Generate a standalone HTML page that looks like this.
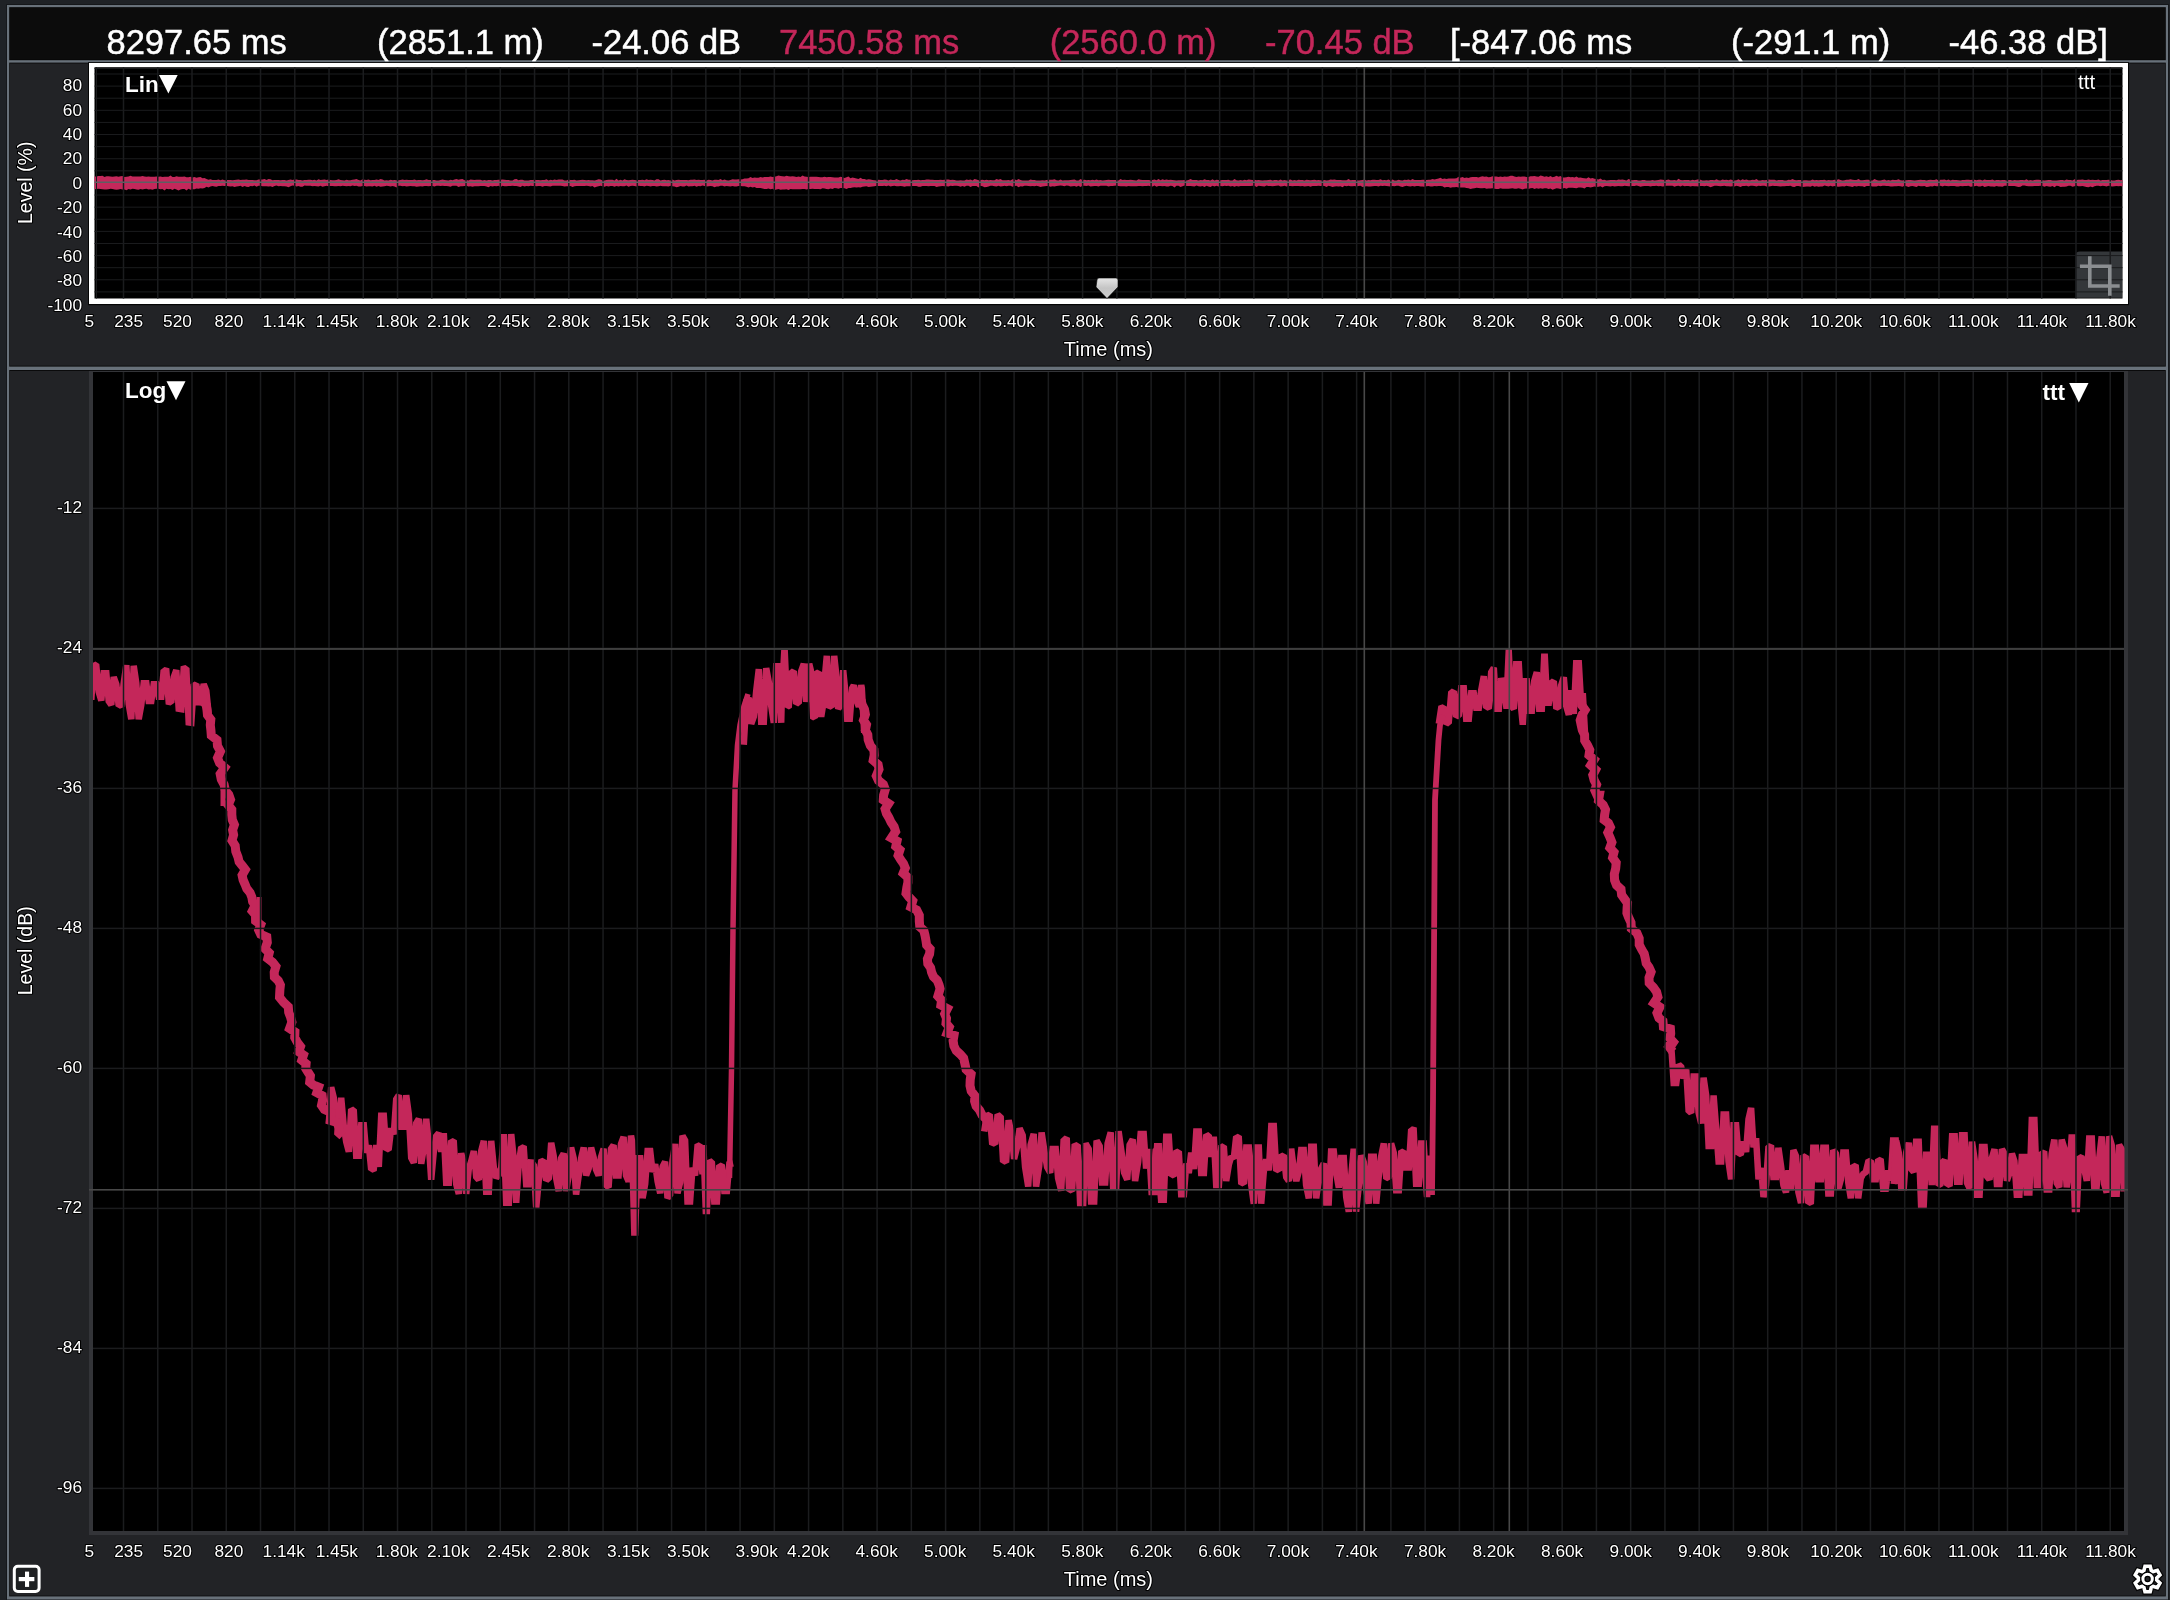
<!DOCTYPE html>
<html><head><meta charset="utf-8"><style>
html,body{margin:0;padding:0;background:#1f2226;width:2170px;height:1600px;overflow:hidden}
svg{display:block;will-change:transform}
text{font-family:"Liberation Sans",sans-serif}
</style></head><body>
<svg width="2170" height="1600" viewBox="0 0 2170 1600">
<rect x="0" y="0" width="2170" height="1600" fill="#1f2226"/>
<rect x="6" y="4" width="2163" height="1596" fill="#15171a"/>
<rect x="7" y="5" width="2161" height="1594.5" fill="#68717a"/>
<rect x="9.2" y="7.2" width="2156.6" height="53" fill="#050505"/>
<rect x="10" y="8" width="2155" height="51.6" fill="#0c0c0c"/>
<rect x="9.2" y="62.6" width="2156.6" height="304" fill="#0a0a0b"/>
<rect x="10" y="63.5" width="2155" height="302.2" fill="#222326"/>
<rect x="9.2" y="370" width="2156.6" height="1226.4" fill="#0a0a0b"/>
<rect x="10" y="371" width="2155" height="1224.6" fill="#222326"/>
<text x="106.50" y="54.40" font-size="34.5" text-anchor="start" fill="#fff" font-weight="normal" stroke="#fff" stroke-width="0.45">8297.65 ms</text>
<text x="377.00" y="54.40" font-size="34.5" text-anchor="start" fill="#fff" font-weight="normal" stroke="#fff" stroke-width="0.45">(2851.1 m)</text>
<text x="591.50" y="54.40" font-size="34.5" text-anchor="start" fill="#fff" font-weight="normal" stroke="#fff" stroke-width="0.45">-24.06 dB</text>
<text x="779.00" y="54.40" font-size="34.5" text-anchor="start" fill="#c4275a" font-weight="normal" stroke="#c4275a" stroke-width="0.45">7450.58 ms</text>
<text x="1049.70" y="54.40" font-size="34.5" text-anchor="start" fill="#c4275a" font-weight="normal" stroke="#c4275a" stroke-width="0.45">(2560.0 m)</text>
<text x="1265.00" y="54.40" font-size="34.5" text-anchor="start" fill="#c4275a" font-weight="normal" stroke="#c4275a" stroke-width="0.45">-70.45 dB</text>
<text x="1450.00" y="54.40" font-size="34.5" text-anchor="start" fill="#fff" font-weight="normal" stroke="#fff" stroke-width="0.45">[-847.06 ms</text>
<text x="1731.00" y="54.40" font-size="34.5" text-anchor="start" fill="#fff" font-weight="normal" stroke="#fff" stroke-width="0.45">(-291.1 m)</text>
<text x="1948.60" y="54.40" font-size="34.5" text-anchor="start" fill="#fff" font-weight="normal" stroke="#fff" stroke-width="0.45">-46.38 dB]</text>
<rect x="88" y="62.2" width="2041" height="243" fill="#050505"/>
<rect x="89" y="63" width="2039" height="241" fill="#ffffff"/>
<rect x="94.5" y="67.2" width="2028" height="231.3" fill="#000"/>
<polygon fill="#c4285b" points="94.5,176.4 96.5,176.5 98.5,176.1 100.5,176.0 102.5,175.7 104.5,176.9 106.5,176.3 108.5,176.2 110.5,176.6 112.5,176.7 114.5,176.6 116.5,176.3 118.5,176.8 120.5,176.3 122.5,176.1 124.5,177.0 126.5,176.7 128.5,176.5 130.5,175.7 132.5,176.5 134.5,176.5 136.5,176.4 138.5,176.4 140.5,176.4 142.5,176.0 144.5,176.5 146.5,176.8 148.5,176.6 150.5,176.7 152.5,176.8 154.5,176.7 156.5,176.5 158.5,176.7 160.5,176.5 162.5,177.0 164.5,176.8 166.5,176.8 168.5,176.8 170.5,175.6 172.5,176.9 174.5,177.0 176.5,176.3 178.5,176.8 180.5,176.8 182.5,176.7 184.5,176.6 186.5,177.3 188.5,177.3 190.5,176.8 192.5,177.5 194.5,177.0 196.5,177.8 198.5,177.3 200.5,177.1 202.5,178.2 204.5,178.1 206.5,179.0 208.5,179.8 210.5,179.3 212.5,180.0 214.5,180.0 216.5,180.1 218.5,179.4 220.5,180.2 222.5,179.4 224.5,180.3 226.5,179.9 228.5,180.0 230.5,179.9 232.5,180.3 234.5,180.1 236.5,179.7 238.5,179.4 240.5,179.9 242.5,179.7 244.5,179.7 246.5,179.5 248.5,180.1 250.5,179.9 252.5,180.0 254.5,180.2 256.5,180.3 258.5,179.4 260.5,179.5 262.5,179.4 264.5,179.1 266.5,179.9 268.5,179.0 270.5,179.3 272.5,180.2 274.5,180.0 276.5,179.9 278.5,180.0 280.5,180.2 282.5,180.0 284.5,179.9 286.5,180.4 288.5,180.1 290.5,179.6 292.5,180.1 294.5,179.6 296.5,179.4 298.5,180.0 300.5,179.9 302.5,180.5 304.5,180.0 306.5,180.1 308.5,179.8 310.5,179.8 312.5,180.2 314.5,179.7 316.5,180.6 318.5,179.3 320.5,180.0 322.5,179.7 324.5,179.6 326.5,180.0 328.5,179.4 330.5,180.1 332.5,180.2 334.5,180.3 336.5,179.9 338.5,179.3 340.5,180.0 342.5,180.3 344.5,180.4 346.5,179.8 348.5,180.3 350.5,180.2 352.5,179.7 354.5,179.4 356.5,179.1 358.5,179.9 360.5,180.4 362.5,179.3 364.5,179.8 366.5,179.9 368.5,179.5 370.5,180.3 372.5,180.1 374.5,180.1 376.5,179.4 378.5,180.0 380.5,179.1 382.5,179.5 384.5,180.4 386.5,180.3 388.5,180.5 390.5,179.8 392.5,180.3 394.5,179.9 396.5,180.2 398.5,180.2 400.5,180.1 402.5,179.6 404.5,180.1 406.5,179.8 408.5,180.1 410.5,180.0 412.5,180.0 414.5,179.6 416.5,180.3 418.5,179.9 420.5,179.9 422.5,180.3 424.5,180.1 426.5,179.2 428.5,179.9 430.5,179.9 432.5,180.1 434.5,180.0 436.5,180.5 438.5,180.4 440.5,180.0 442.5,179.5 444.5,180.1 446.5,180.2 448.5,180.6 450.5,179.7 452.5,180.2 454.5,179.4 456.5,178.9 458.5,179.8 460.5,179.2 462.5,179.1 464.5,180.3 466.5,179.9 468.5,180.6 470.5,179.6 472.5,179.8 474.5,179.9 476.5,179.7 478.5,179.8 480.5,179.7 482.5,180.5 484.5,180.1 486.5,180.4 488.5,180.0 490.5,180.1 492.5,180.5 494.5,180.1 496.5,180.0 498.5,179.7 500.5,179.8 502.5,179.4 504.5,179.8 506.5,180.0 508.5,179.9 510.5,180.5 512.5,180.4 514.5,179.3 516.5,179.0 518.5,180.3 520.5,179.7 522.5,179.8 524.5,180.5 526.5,180.5 528.5,180.6 530.5,180.0 532.5,179.9 534.5,179.8 536.5,180.0 538.5,179.9 540.5,180.3 542.5,180.1 544.5,180.0 546.5,179.3 548.5,180.4 550.5,179.7 552.5,180.2 554.5,179.6 556.5,180.1 558.5,179.4 560.5,179.4 562.5,179.5 564.5,180.5 566.5,180.5 568.5,179.6 570.5,180.0 572.5,179.9 574.5,179.8 576.5,180.5 578.5,180.3 580.5,180.0 582.5,179.7 584.5,180.1 586.5,180.2 588.5,179.9 590.5,180.3 592.5,180.2 594.5,180.6 596.5,180.0 598.5,179.2 600.5,179.6 602.5,180.4 604.5,180.5 606.5,180.0 608.5,179.8 610.5,179.7 612.5,179.8 614.5,180.4 616.5,178.7 618.5,180.4 620.5,179.8 622.5,180.4 624.5,179.2 626.5,180.1 628.5,180.3 630.5,179.9 632.5,179.8 634.5,179.9 636.5,180.3 638.5,180.0 640.5,180.1 642.5,179.7 644.5,180.3 646.5,179.3 648.5,180.1 650.5,179.7 652.5,179.9 654.5,180.5 656.5,179.2 658.5,179.3 660.5,180.4 662.5,180.0 664.5,179.8 666.5,180.2 668.5,179.9 670.5,180.5 672.5,179.5 674.5,180.5 676.5,180.1 678.5,179.7 680.5,179.9 682.5,179.9 684.5,179.9 686.5,180.1 688.5,180.2 690.5,179.8 692.5,179.8 694.5,179.6 696.5,179.9 698.5,179.8 700.5,179.9 702.5,180.0 704.5,179.8 706.5,180.5 708.5,179.8 710.5,179.9 712.5,180.5 714.5,179.8 716.5,179.8 718.5,179.9 720.5,179.1 722.5,180.3 724.5,179.5 726.5,180.3 728.5,180.5 730.5,179.9 732.5,179.2 734.5,179.5 736.5,179.5 738.5,179.3 740.5,179.4 742.5,179.3 744.5,178.5 746.5,178.5 748.5,178.3 750.5,177.0 752.5,178.1 754.5,177.6 756.5,177.7 758.5,177.7 760.5,177.0 762.5,177.5 764.5,177.0 766.5,177.0 768.5,177.0 770.5,176.5 772.5,176.9 774.5,176.8 776.5,176.2 778.5,175.5 780.5,176.0 782.5,176.2 784.5,176.5 786.5,175.7 788.5,176.3 790.5,176.6 792.5,176.3 794.5,176.6 796.5,177.0 798.5,176.6 800.5,176.9 802.5,175.5 804.5,176.6 806.5,176.8 808.5,177.1 810.5,176.8 812.5,176.7 814.5,176.8 816.5,176.8 818.5,177.0 820.5,177.2 822.5,177.3 824.5,176.7 826.5,177.2 828.5,177.1 830.5,177.1 832.5,177.2 834.5,177.5 836.5,177.5 838.5,177.6 840.5,176.8 842.5,177.3 844.5,178.1 846.5,177.3 848.5,176.6 850.5,178.3 852.5,177.4 854.5,178.0 856.5,178.4 858.5,178.9 860.5,177.8 862.5,178.9 864.5,179.0 866.5,179.7 868.5,179.2 870.5,179.5 872.5,179.9 874.5,180.3 876.5,180.4 878.5,179.7 880.5,180.1 882.5,180.0 884.5,179.5 886.5,179.8 888.5,180.5 890.5,179.4 892.5,180.1 894.5,179.9 896.5,178.9 898.5,179.9 900.5,180.4 902.5,179.8 904.5,180.1 906.5,179.0 908.5,179.7 910.5,179.8 912.5,180.2 914.5,180.0 916.5,180.0 918.5,179.7 920.5,180.3 922.5,179.9 924.5,180.1 926.5,179.5 928.5,179.6 930.5,179.8 932.5,179.8 934.5,179.9 936.5,180.1 938.5,180.1 940.5,179.7 942.5,180.1 944.5,179.7 946.5,179.5 948.5,179.6 950.5,180.1 952.5,179.7 954.5,180.1 956.5,180.6 958.5,180.4 960.5,180.2 962.5,180.5 964.5,180.4 966.5,179.5 968.5,180.0 970.5,179.6 972.5,180.5 974.5,178.9 976.5,179.4 978.5,180.2 980.5,180.0 982.5,179.8 984.5,180.2 986.5,179.8 988.5,180.3 990.5,179.9 992.5,180.2 994.5,180.3 996.5,179.0 998.5,179.8 1000.5,179.0 1002.5,180.2 1004.5,180.3 1006.5,180.3 1008.5,180.0 1010.5,180.5 1012.5,179.3 1014.5,179.2 1016.5,180.2 1018.5,178.9 1020.5,179.9 1022.5,180.4 1024.5,180.4 1026.5,180.4 1028.5,180.5 1030.5,179.6 1032.5,179.9 1034.5,180.0 1036.5,180.4 1038.5,180.4 1040.5,180.4 1042.5,180.2 1044.5,180.5 1046.5,180.1 1048.5,179.8 1050.5,179.7 1052.5,179.8 1054.5,179.2 1056.5,180.2 1058.5,180.6 1060.5,179.6 1062.5,180.4 1064.5,180.2 1066.5,180.3 1068.5,180.2 1070.5,180.1 1072.5,179.8 1074.5,179.6 1076.5,180.4 1078.5,180.4 1080.5,179.1 1082.5,179.9 1084.5,179.7 1086.5,180.3 1088.5,180.1 1090.5,180.2 1092.5,179.8 1094.5,180.3 1096.5,179.4 1098.5,180.2 1100.5,179.9 1102.5,180.5 1104.5,180.2 1106.5,180.0 1108.5,179.8 1110.5,180.1 1112.5,180.1 1114.5,180.0 1116.5,180.0 1118.5,180.5 1120.5,178.9 1122.5,179.9 1124.5,179.8 1126.5,179.9 1128.5,179.9 1130.5,179.8 1132.5,180.1 1134.5,180.2 1136.5,180.5 1138.5,179.2 1140.5,179.8 1142.5,180.1 1144.5,180.0 1146.5,179.9 1148.5,179.9 1150.5,180.3 1152.5,180.0 1154.5,179.4 1156.5,180.2 1158.5,179.0 1160.5,180.3 1162.5,179.2 1164.5,179.9 1166.5,179.6 1168.5,180.0 1170.5,179.8 1172.5,180.1 1174.5,180.3 1176.5,180.5 1178.5,180.2 1180.5,180.2 1182.5,180.3 1184.5,179.9 1186.5,180.4 1188.5,180.1 1190.5,179.0 1192.5,179.9 1194.5,179.9 1196.5,179.9 1198.5,180.4 1200.5,179.9 1202.5,180.3 1204.5,179.2 1206.5,180.0 1208.5,180.0 1210.5,180.4 1212.5,179.3 1214.5,180.4 1216.5,179.8 1218.5,180.1 1220.5,180.2 1222.5,180.1 1224.5,180.1 1226.5,180.0 1228.5,179.7 1230.5,180.5 1232.5,180.4 1234.5,179.1 1236.5,180.2 1238.5,180.4 1240.5,180.1 1242.5,180.5 1244.5,179.7 1246.5,180.3 1248.5,179.4 1250.5,179.8 1252.5,180.0 1254.5,179.7 1256.5,180.2 1258.5,179.9 1260.5,180.3 1262.5,180.4 1264.5,180.3 1266.5,180.2 1268.5,179.9 1270.5,179.8 1272.5,180.4 1274.5,180.0 1276.5,180.1 1278.5,180.4 1280.5,179.5 1282.5,180.4 1284.5,179.9 1286.5,180.5 1288.5,179.9 1290.5,179.6 1292.5,180.5 1294.5,180.0 1296.5,180.4 1298.5,179.8 1300.5,180.0 1302.5,180.0 1304.5,180.5 1306.5,179.8 1308.5,179.9 1310.5,180.3 1312.5,179.9 1314.5,179.8 1316.5,180.2 1318.5,180.1 1320.5,180.3 1322.5,180.5 1324.5,180.1 1326.5,180.4 1328.5,180.3 1330.5,179.5 1332.5,179.8 1334.5,179.6 1336.5,180.1 1338.5,180.0 1340.5,180.0 1342.5,180.2 1344.5,180.2 1346.5,180.3 1348.5,179.1 1350.5,180.2 1352.5,179.9 1354.5,179.9 1356.5,180.1 1358.5,180.5 1360.5,180.2 1362.5,180.0 1364.5,179.4 1366.5,180.4 1368.5,180.0 1370.5,180.3 1372.5,179.8 1374.5,179.7 1376.5,180.1 1378.5,179.9 1380.5,179.3 1382.5,180.2 1384.5,179.9 1386.5,180.3 1388.5,179.6 1390.5,180.4 1392.5,179.4 1394.5,180.5 1396.5,180.4 1398.5,179.7 1400.5,180.3 1402.5,180.4 1404.5,179.7 1406.5,179.9 1408.5,179.5 1410.5,180.3 1412.5,179.1 1414.5,179.9 1416.5,179.9 1418.5,179.9 1420.5,180.1 1422.5,179.8 1424.5,179.8 1426.5,180.1 1428.5,179.8 1430.5,179.8 1432.5,179.1 1434.5,179.4 1436.5,179.1 1438.5,178.6 1440.5,177.8 1442.5,179.0 1444.5,178.5 1446.5,179.1 1448.5,178.5 1450.5,178.4 1452.5,178.5 1454.5,178.4 1456.5,178.2 1458.5,176.8 1460.5,177.8 1462.5,176.9 1464.5,177.9 1466.5,177.6 1468.5,178.0 1470.5,177.2 1472.5,177.1 1474.5,177.0 1476.5,177.1 1478.5,177.4 1480.5,176.7 1482.5,176.3 1484.5,176.7 1486.5,176.6 1488.5,177.2 1490.5,176.9 1492.5,176.3 1494.5,176.5 1496.5,176.6 1498.5,177.0 1500.5,176.5 1502.5,176.9 1504.5,176.6 1506.5,176.7 1508.5,176.5 1510.5,175.8 1512.5,175.8 1514.5,176.6 1516.5,177.1 1518.5,176.4 1520.5,176.8 1522.5,176.5 1524.5,176.5 1526.5,177.1 1528.5,177.0 1530.5,176.3 1532.5,176.2 1534.5,176.0 1536.5,176.6 1538.5,176.7 1540.5,175.6 1542.5,176.0 1544.5,176.7 1546.5,176.2 1548.5,177.0 1550.5,176.1 1552.5,177.2 1554.5,176.8 1556.5,175.8 1558.5,176.7 1560.5,176.1 1562.5,177.5 1564.5,177.4 1566.5,177.3 1568.5,176.7 1570.5,177.2 1572.5,177.1 1574.5,177.6 1576.5,176.6 1578.5,177.7 1580.5,177.6 1582.5,178.0 1584.5,178.2 1586.5,178.4 1588.5,177.3 1590.5,178.5 1592.5,177.9 1594.5,178.8 1596.5,179.1 1598.5,179.6 1600.5,178.5 1602.5,180.1 1604.5,179.8 1606.5,180.4 1608.5,180.3 1610.5,179.9 1612.5,179.9 1614.5,180.0 1616.5,180.2 1618.5,179.5 1620.5,179.8 1622.5,179.6 1624.5,179.9 1626.5,180.4 1628.5,178.9 1630.5,179.8 1632.5,180.3 1634.5,180.1 1636.5,179.9 1638.5,180.4 1640.5,180.5 1642.5,179.9 1644.5,180.1 1646.5,180.4 1648.5,180.4 1650.5,180.5 1652.5,179.9 1654.5,180.4 1656.5,180.2 1658.5,180.1 1660.5,179.5 1662.5,179.8 1664.5,180.1 1666.5,180.1 1668.5,179.4 1670.5,180.3 1672.5,180.3 1674.5,180.1 1676.5,180.5 1678.5,178.7 1680.5,180.0 1682.5,180.2 1684.5,180.1 1686.5,180.0 1688.5,180.1 1690.5,180.4 1692.5,179.8 1694.5,180.2 1696.5,179.8 1698.5,179.3 1700.5,179.8 1702.5,180.5 1704.5,180.5 1706.5,180.2 1708.5,180.5 1710.5,179.9 1712.5,180.0 1714.5,180.3 1716.5,179.3 1718.5,180.3 1720.5,180.5 1722.5,179.4 1724.5,180.0 1726.5,179.8 1728.5,180.3 1730.5,179.4 1732.5,180.0 1734.5,180.5 1736.5,180.2 1738.5,179.3 1740.5,180.5 1742.5,179.2 1744.5,180.0 1746.5,179.6 1748.5,180.2 1750.5,180.3 1752.5,179.7 1754.5,180.1 1756.5,179.0 1758.5,180.5 1760.5,180.5 1762.5,179.9 1764.5,180.2 1766.5,180.0 1768.5,179.5 1770.5,179.8 1772.5,179.7 1774.5,179.8 1776.5,180.5 1778.5,179.9 1780.5,179.9 1782.5,180.1 1784.5,180.4 1786.5,180.5 1788.5,179.7 1790.5,180.1 1792.5,179.0 1794.5,180.1 1796.5,180.3 1798.5,180.1 1800.5,180.1 1802.5,180.4 1804.5,180.2 1806.5,180.3 1808.5,180.5 1810.5,180.6 1812.5,179.5 1814.5,180.2 1816.5,180.1 1818.5,180.3 1820.5,180.1 1822.5,180.0 1824.5,179.8 1826.5,180.4 1828.5,180.1 1830.5,180.3 1832.5,180.3 1834.5,179.7 1836.5,179.9 1838.5,179.3 1840.5,180.1 1842.5,180.6 1844.5,180.2 1846.5,179.7 1848.5,179.8 1850.5,179.3 1852.5,179.7 1854.5,179.9 1856.5,180.0 1858.5,179.0 1860.5,180.3 1862.5,180.3 1864.5,180.1 1866.5,179.8 1868.5,179.8 1870.5,180.4 1872.5,180.4 1874.5,179.1 1876.5,180.0 1878.5,180.4 1880.5,180.5 1882.5,180.0 1884.5,179.6 1886.5,180.6 1888.5,179.9 1890.5,180.6 1892.5,179.7 1894.5,180.1 1896.5,180.1 1898.5,179.3 1900.5,180.3 1902.5,180.4 1904.5,180.0 1906.5,180.2 1908.5,179.9 1910.5,180.1 1912.5,180.3 1914.5,180.4 1916.5,180.2 1918.5,179.9 1920.5,179.7 1922.5,180.0 1924.5,179.9 1926.5,180.4 1928.5,179.9 1930.5,179.7 1932.5,180.0 1934.5,180.0 1936.5,179.3 1938.5,180.4 1940.5,179.7 1942.5,179.8 1944.5,179.4 1946.5,180.3 1948.5,179.6 1950.5,180.4 1952.5,179.8 1954.5,180.1 1956.5,180.1 1958.5,180.2 1960.5,180.6 1962.5,180.0 1964.5,180.1 1966.5,179.7 1968.5,179.8 1970.5,180.0 1972.5,179.8 1974.5,179.8 1976.5,180.3 1978.5,179.8 1980.5,179.8 1982.5,180.4 1984.5,179.6 1986.5,180.1 1988.5,179.9 1990.5,180.0 1992.5,179.5 1994.5,180.4 1996.5,179.9 1998.5,180.1 2000.5,180.2 2002.5,179.9 2004.5,180.1 2006.5,180.5 2008.5,179.9 2010.5,180.1 2012.5,180.4 2014.5,180.1 2016.5,180.3 2018.5,180.3 2020.5,180.0 2022.5,180.0 2024.5,180.2 2026.5,179.2 2028.5,180.4 2030.5,179.9 2032.5,180.4 2034.5,179.9 2036.5,179.7 2038.5,179.8 2040.5,179.9 2042.5,180.2 2044.5,180.4 2046.5,180.2 2048.5,180.1 2050.5,180.1 2052.5,180.5 2054.5,180.4 2056.5,180.4 2058.5,180.3 2060.5,180.0 2062.5,180.0 2064.5,180.4 2066.5,179.5 2068.5,179.9 2070.5,180.1 2072.5,180.4 2074.5,179.3 2076.5,180.0 2078.5,179.7 2080.5,179.8 2082.5,179.4 2084.5,180.0 2086.5,180.1 2088.5,179.4 2090.5,179.9 2092.5,179.8 2094.5,179.9 2096.5,180.1 2098.5,179.6 2100.5,180.4 2102.5,180.1 2104.5,179.9 2106.5,179.9 2108.5,179.7 2110.5,180.0 2112.5,180.4 2114.5,180.5 2116.5,180.1 2118.5,179.8 2120.5,180.2 2122.5,179.9 2122.5,186.4 2120.5,186.1 2118.5,186.3 2116.5,186.1 2114.5,186.3 2112.5,186.4 2110.5,186.2 2108.5,185.7 2106.5,186.6 2104.5,185.9 2102.5,185.8 2100.5,186.2 2098.5,185.8 2096.5,185.8 2094.5,186.3 2092.5,187.3 2090.5,186.6 2088.5,187.2 2086.5,186.9 2084.5,186.4 2082.5,186.0 2080.5,186.3 2078.5,186.2 2076.5,185.6 2074.5,186.2 2072.5,186.7 2070.5,185.7 2068.5,185.8 2066.5,186.6 2064.5,186.7 2062.5,186.8 2060.5,186.9 2058.5,186.0 2056.5,185.7 2054.5,187.2 2052.5,185.9 2050.5,186.7 2048.5,186.4 2046.5,186.1 2044.5,186.7 2042.5,185.9 2040.5,185.7 2038.5,186.1 2036.5,186.1 2034.5,186.0 2032.5,186.2 2030.5,186.2 2028.5,186.3 2026.5,185.9 2024.5,185.6 2022.5,185.6 2020.5,186.7 2018.5,186.9 2016.5,186.5 2014.5,185.9 2012.5,186.0 2010.5,186.0 2008.5,186.0 2006.5,185.8 2004.5,185.8 2002.5,186.8 2000.5,186.4 1998.5,186.6 1996.5,185.9 1994.5,186.8 1992.5,186.4 1990.5,186.4 1988.5,186.1 1986.5,186.4 1984.5,187.1 1982.5,185.7 1980.5,186.6 1978.5,186.4 1976.5,185.8 1974.5,186.2 1972.5,186.4 1970.5,186.7 1968.5,185.8 1966.5,186.0 1964.5,185.9 1962.5,186.2 1960.5,186.0 1958.5,186.4 1956.5,186.4 1954.5,186.1 1952.5,185.9 1950.5,186.0 1948.5,186.3 1946.5,185.9 1944.5,185.7 1942.5,186.5 1940.5,185.7 1938.5,186.3 1936.5,186.2 1934.5,185.8 1932.5,186.5 1930.5,186.3 1928.5,186.7 1926.5,187.0 1924.5,185.9 1922.5,186.3 1920.5,186.2 1918.5,185.7 1916.5,186.9 1914.5,186.4 1912.5,185.9 1910.5,186.2 1908.5,187.1 1906.5,186.3 1904.5,185.7 1902.5,186.8 1900.5,186.2 1898.5,186.0 1896.5,186.2 1894.5,186.2 1892.5,186.5 1890.5,186.5 1888.5,185.9 1886.5,185.9 1884.5,185.8 1882.5,185.8 1880.5,186.2 1878.5,185.8 1876.5,186.5 1874.5,186.4 1872.5,186.4 1870.5,186.1 1868.5,186.1 1866.5,186.1 1864.5,187.0 1862.5,186.2 1860.5,186.2 1858.5,186.1 1856.5,186.4 1854.5,186.1 1852.5,186.9 1850.5,186.5 1848.5,186.3 1846.5,185.8 1844.5,186.6 1842.5,186.3 1840.5,186.4 1838.5,186.8 1836.5,186.4 1834.5,186.1 1832.5,186.5 1830.5,185.7 1828.5,186.4 1826.5,186.1 1824.5,185.6 1822.5,186.6 1820.5,186.6 1818.5,186.8 1816.5,186.3 1814.5,186.7 1812.5,185.8 1810.5,186.7 1808.5,186.4 1806.5,186.6 1804.5,186.7 1802.5,187.1 1800.5,186.5 1798.5,185.9 1796.5,185.9 1794.5,187.0 1792.5,186.8 1790.5,185.8 1788.5,186.1 1786.5,185.9 1784.5,186.3 1782.5,186.3 1780.5,186.4 1778.5,186.2 1776.5,186.1 1774.5,186.0 1772.5,185.7 1770.5,186.2 1768.5,186.5 1766.5,186.4 1764.5,185.8 1762.5,185.8 1760.5,186.0 1758.5,185.7 1756.5,186.4 1754.5,186.1 1752.5,185.8 1750.5,185.7 1748.5,186.4 1746.5,185.8 1744.5,186.1 1742.5,186.1 1740.5,187.1 1738.5,186.3 1736.5,185.7 1734.5,186.6 1732.5,186.2 1730.5,186.4 1728.5,186.3 1726.5,186.2 1724.5,185.8 1722.5,185.9 1720.5,186.3 1718.5,186.0 1716.5,185.8 1714.5,185.8 1712.5,186.5 1710.5,187.2 1708.5,186.3 1706.5,185.8 1704.5,186.3 1702.5,186.1 1700.5,186.1 1698.5,186.6 1696.5,186.3 1694.5,186.2 1692.5,186.0 1690.5,186.4 1688.5,186.1 1686.5,186.0 1684.5,186.3 1682.5,185.6 1680.5,186.4 1678.5,185.8 1676.5,185.9 1674.5,186.8 1672.5,185.8 1670.5,185.8 1668.5,185.7 1666.5,185.7 1664.5,186.2 1662.5,186.4 1660.5,186.0 1658.5,186.3 1656.5,185.7 1654.5,186.1 1652.5,185.9 1650.5,186.6 1648.5,186.0 1646.5,186.1 1644.5,186.0 1642.5,186.3 1640.5,186.7 1638.5,185.9 1636.5,185.6 1634.5,185.9 1632.5,186.0 1630.5,186.2 1628.5,186.2 1626.5,186.0 1624.5,185.7 1622.5,186.3 1620.5,186.3 1618.5,186.1 1616.5,186.3 1614.5,186.4 1612.5,186.0 1610.5,186.6 1608.5,186.2 1606.5,186.1 1604.5,186.2 1602.5,187.4 1600.5,186.2 1598.5,186.7 1596.5,187.0 1594.5,186.6 1592.5,186.9 1590.5,187.5 1588.5,187.1 1586.5,187.1 1584.5,188.6 1582.5,187.7 1580.5,187.5 1578.5,187.4 1576.5,188.2 1574.5,188.1 1572.5,187.8 1570.5,187.8 1568.5,187.7 1566.5,188.8 1564.5,188.1 1562.5,188.4 1560.5,189.1 1558.5,188.5 1556.5,188.3 1554.5,189.1 1552.5,189.8 1550.5,188.6 1548.5,189.1 1546.5,188.3 1544.5,188.2 1542.5,188.7 1540.5,188.2 1538.5,188.7 1536.5,188.2 1534.5,188.9 1532.5,188.1 1530.5,188.2 1528.5,189.0 1526.5,188.6 1524.5,188.7 1522.5,189.5 1520.5,188.8 1518.5,188.2 1516.5,188.7 1514.5,188.7 1512.5,188.2 1510.5,188.5 1508.5,188.8 1506.5,188.7 1504.5,188.7 1502.5,188.8 1500.5,188.3 1498.5,188.9 1496.5,189.0 1494.5,188.7 1492.5,188.3 1490.5,188.6 1488.5,188.5 1486.5,188.8 1484.5,188.1 1482.5,188.3 1480.5,188.3 1478.5,188.0 1476.5,187.8 1474.5,188.3 1472.5,188.4 1470.5,189.0 1468.5,188.2 1466.5,187.9 1464.5,187.4 1462.5,187.6 1460.5,187.4 1458.5,187.4 1456.5,186.9 1454.5,187.3 1452.5,187.2 1450.5,187.8 1448.5,187.0 1446.5,187.1 1444.5,187.6 1442.5,186.3 1440.5,186.0 1438.5,186.1 1436.5,186.2 1434.5,186.0 1432.5,186.6 1430.5,186.6 1428.5,186.1 1426.5,186.3 1424.5,186.7 1422.5,186.4 1420.5,186.4 1418.5,186.0 1416.5,186.1 1414.5,186.4 1412.5,186.1 1410.5,186.4 1408.5,186.2 1406.5,185.7 1404.5,186.2 1402.5,186.9 1400.5,186.4 1398.5,185.8 1396.5,185.8 1394.5,186.2 1392.5,185.9 1390.5,186.6 1388.5,186.3 1386.5,185.9 1384.5,185.7 1382.5,186.1 1380.5,185.8 1378.5,186.4 1376.5,186.1 1374.5,186.0 1372.5,186.2 1370.5,186.5 1368.5,186.4 1366.5,186.2 1364.5,186.5 1362.5,187.1 1360.5,185.8 1358.5,185.9 1356.5,186.6 1354.5,186.0 1352.5,186.2 1350.5,186.2 1348.5,185.7 1346.5,186.2 1344.5,185.7 1342.5,187.2 1340.5,186.2 1338.5,186.4 1336.5,186.3 1334.5,186.5 1332.5,187.1 1330.5,186.3 1328.5,185.8 1326.5,187.0 1324.5,186.0 1322.5,185.7 1320.5,185.9 1318.5,185.7 1316.5,185.9 1314.5,186.0 1312.5,185.9 1310.5,186.7 1308.5,185.9 1306.5,186.3 1304.5,186.5 1302.5,186.0 1300.5,186.3 1298.5,185.9 1296.5,186.0 1294.5,185.9 1292.5,186.2 1290.5,186.0 1288.5,186.1 1286.5,186.5 1284.5,185.8 1282.5,186.2 1280.5,186.5 1278.5,185.6 1276.5,185.8 1274.5,185.9 1272.5,186.2 1270.5,186.1 1268.5,185.9 1266.5,185.6 1264.5,186.5 1262.5,186.3 1260.5,186.1 1258.5,185.8 1256.5,186.9 1254.5,185.8 1252.5,185.8 1250.5,185.9 1248.5,186.0 1246.5,185.9 1244.5,186.1 1242.5,186.1 1240.5,186.1 1238.5,186.4 1236.5,186.0 1234.5,186.7 1232.5,186.1 1230.5,186.4 1228.5,185.7 1226.5,186.1 1224.5,185.8 1222.5,186.2 1220.5,186.0 1218.5,186.4 1216.5,185.8 1214.5,186.5 1212.5,185.8 1210.5,187.1 1208.5,186.6 1206.5,185.8 1204.5,187.0 1202.5,186.0 1200.5,186.4 1198.5,186.2 1196.5,185.6 1194.5,186.5 1192.5,186.2 1190.5,186.1 1188.5,185.9 1186.5,186.1 1184.5,185.6 1182.5,186.3 1180.5,187.0 1178.5,185.8 1176.5,185.7 1174.5,187.4 1172.5,186.0 1170.5,185.7 1168.5,186.4 1166.5,186.4 1164.5,186.0 1162.5,186.2 1160.5,186.0 1158.5,186.1 1156.5,186.7 1154.5,185.6 1152.5,186.4 1150.5,186.3 1148.5,185.8 1146.5,186.0 1144.5,185.9 1142.5,186.2 1140.5,186.1 1138.5,186.1 1136.5,186.3 1134.5,186.3 1132.5,186.2 1130.5,186.3 1128.5,186.1 1126.5,186.6 1124.5,186.2 1122.5,186.3 1120.5,186.2 1118.5,186.1 1116.5,185.6 1114.5,185.8 1112.5,186.1 1110.5,186.0 1108.5,186.4 1106.5,185.8 1104.5,185.7 1102.5,185.8 1100.5,185.8 1098.5,186.4 1096.5,186.1 1094.5,186.1 1092.5,186.3 1090.5,186.5 1088.5,185.6 1086.5,186.0 1084.5,185.8 1082.5,185.7 1080.5,187.0 1078.5,185.8 1076.5,186.8 1074.5,185.9 1072.5,186.2 1070.5,186.6 1068.5,185.8 1066.5,185.6 1064.5,186.2 1062.5,185.7 1060.5,185.6 1058.5,185.7 1056.5,186.0 1054.5,186.4 1052.5,186.2 1050.5,186.8 1048.5,186.0 1046.5,186.0 1044.5,186.2 1042.5,186.4 1040.5,186.9 1038.5,186.2 1036.5,185.8 1034.5,186.3 1032.5,186.1 1030.5,186.2 1028.5,186.1 1026.5,185.8 1024.5,185.7 1022.5,186.4 1020.5,186.3 1018.5,187.2 1016.5,185.8 1014.5,186.1 1012.5,186.8 1010.5,185.8 1008.5,185.7 1006.5,186.3 1004.5,185.8 1002.5,186.3 1000.5,186.4 998.5,185.7 996.5,186.6 994.5,186.2 992.5,185.8 990.5,185.8 988.5,186.4 986.5,187.1 984.5,187.2 982.5,186.3 980.5,185.8 978.5,187.5 976.5,186.1 974.5,185.9 972.5,186.1 970.5,186.9 968.5,185.7 966.5,185.8 964.5,186.7 962.5,186.1 960.5,186.8 958.5,186.1 956.5,185.8 954.5,185.7 952.5,186.0 950.5,185.8 948.5,186.4 946.5,186.2 944.5,186.3 942.5,186.0 940.5,186.3 938.5,186.4 936.5,186.9 934.5,186.1 932.5,186.1 930.5,186.0 928.5,186.2 926.5,186.1 924.5,186.1 922.5,186.0 920.5,186.7 918.5,186.7 916.5,186.1 914.5,186.1 912.5,186.0 910.5,186.3 908.5,186.3 906.5,186.2 904.5,186.8 902.5,186.2 900.5,186.0 898.5,186.2 896.5,186.3 894.5,185.8 892.5,186.1 890.5,186.4 888.5,185.6 886.5,186.3 884.5,185.7 882.5,185.9 880.5,186.1 878.5,186.1 876.5,185.7 874.5,186.2 872.5,186.4 870.5,186.8 868.5,186.9 866.5,186.3 864.5,186.6 862.5,186.8 860.5,187.5 858.5,187.2 856.5,187.6 854.5,187.3 852.5,187.5 850.5,188.1 848.5,187.9 846.5,188.9 844.5,188.2 842.5,187.9 840.5,188.1 838.5,188.8 836.5,188.2 834.5,188.1 832.5,188.9 830.5,188.4 828.5,189.3 826.5,188.9 824.5,188.5 822.5,188.3 820.5,189.3 818.5,189.0 816.5,188.9 814.5,189.0 812.5,188.8 810.5,188.9 808.5,189.0 806.5,189.4 804.5,189.1 802.5,189.1 800.5,189.2 798.5,189.2 796.5,189.3 794.5,189.2 792.5,189.3 790.5,189.0 788.5,190.0 786.5,189.2 784.5,189.6 782.5,189.5 780.5,189.7 778.5,189.0 776.5,189.4 774.5,190.0 772.5,188.8 770.5,189.2 768.5,188.5 766.5,188.9 764.5,189.1 762.5,188.4 760.5,188.1 758.5,187.9 756.5,187.9 754.5,187.1 752.5,187.4 750.5,186.8 748.5,187.5 746.5,186.7 744.5,186.3 742.5,186.3 740.5,186.1 738.5,186.1 736.5,186.5 734.5,186.5 732.5,185.9 730.5,186.4 728.5,186.3 726.5,185.9 724.5,186.5 722.5,185.8 720.5,185.8 718.5,186.4 716.5,186.4 714.5,187.3 712.5,186.3 710.5,186.0 708.5,186.3 706.5,186.4 704.5,185.9 702.5,185.6 700.5,186.2 698.5,186.1 696.5,186.7 694.5,185.7 692.5,186.2 690.5,186.3 688.5,186.4 686.5,185.6 684.5,186.5 682.5,186.4 680.5,186.1 678.5,186.7 676.5,187.2 674.5,186.5 672.5,186.2 670.5,185.8 668.5,186.4 666.5,186.3 664.5,186.2 662.5,186.2 660.5,185.8 658.5,186.2 656.5,186.5 654.5,185.9 652.5,186.1 650.5,186.4 648.5,186.0 646.5,185.7 644.5,186.6 642.5,186.1 640.5,185.9 638.5,185.8 636.5,186.6 634.5,186.1 632.5,185.7 630.5,186.1 628.5,186.7 626.5,185.6 624.5,186.2 622.5,186.3 620.5,186.0 618.5,186.5 616.5,186.1 614.5,186.7 612.5,186.1 610.5,186.1 608.5,186.6 606.5,186.0 604.5,186.8 602.5,186.3 600.5,185.7 598.5,186.3 596.5,186.8 594.5,187.5 592.5,186.0 590.5,186.5 588.5,186.0 586.5,185.7 584.5,186.0 582.5,186.0 580.5,186.0 578.5,186.0 576.5,186.1 574.5,186.2 572.5,186.9 570.5,186.0 568.5,186.3 566.5,186.2 564.5,186.4 562.5,186.0 560.5,185.8 558.5,185.7 556.5,185.7 554.5,185.8 552.5,185.7 550.5,186.6 548.5,186.3 546.5,185.9 544.5,185.9 542.5,186.8 540.5,185.9 538.5,186.0 536.5,186.3 534.5,186.1 532.5,186.1 530.5,185.7 528.5,186.2 526.5,186.1 524.5,186.4 522.5,185.7 520.5,187.0 518.5,186.4 516.5,186.0 514.5,186.1 512.5,185.8 510.5,186.1 508.5,186.1 506.5,186.3 504.5,186.2 502.5,185.8 500.5,186.9 498.5,185.8 496.5,186.2 494.5,186.1 492.5,186.5 490.5,186.0 488.5,187.3 486.5,186.4 484.5,185.9 482.5,186.0 480.5,185.9 478.5,186.3 476.5,186.2 474.5,186.3 472.5,186.7 470.5,186.3 468.5,186.4 466.5,185.8 464.5,185.9 462.5,186.2 460.5,186.3 458.5,187.0 456.5,185.7 454.5,185.7 452.5,185.8 450.5,186.8 448.5,186.3 446.5,186.0 444.5,186.1 442.5,185.8 440.5,185.9 438.5,185.8 436.5,185.8 434.5,186.5 432.5,186.1 430.5,186.1 428.5,186.3 426.5,186.1 424.5,186.0 422.5,186.4 420.5,186.2 418.5,186.4 416.5,186.7 414.5,186.3 412.5,186.3 410.5,185.9 408.5,186.3 406.5,186.4 404.5,185.9 402.5,186.2 400.5,185.8 398.5,185.8 396.5,187.5 394.5,186.5 392.5,186.1 390.5,186.4 388.5,186.0 386.5,185.8 384.5,186.2 382.5,186.4 380.5,186.7 378.5,186.0 376.5,186.7 374.5,185.8 372.5,186.5 370.5,186.3 368.5,186.3 366.5,186.4 364.5,186.0 362.5,186.0 360.5,186.5 358.5,186.4 356.5,185.8 354.5,186.0 352.5,185.6 350.5,186.3 348.5,186.0 346.5,186.3 344.5,186.1 342.5,185.7 340.5,186.3 338.5,186.0 336.5,186.2 334.5,186.2 332.5,186.1 330.5,186.0 328.5,186.2 326.5,185.7 324.5,186.3 322.5,186.7 320.5,185.8 318.5,186.4 316.5,186.3 314.5,185.9 312.5,186.3 310.5,185.8 308.5,185.7 306.5,185.8 304.5,185.6 302.5,186.8 300.5,186.8 298.5,185.9 296.5,186.5 294.5,185.8 292.5,185.6 290.5,186.3 288.5,187.2 286.5,186.5 284.5,186.3 282.5,186.2 280.5,185.9 278.5,186.2 276.5,185.6 274.5,186.0 272.5,186.9 270.5,186.2 268.5,186.5 266.5,186.2 264.5,186.3 262.5,186.3 260.5,185.8 258.5,185.7 256.5,186.8 254.5,185.6 252.5,186.2 250.5,186.0 248.5,186.9 246.5,186.7 244.5,186.1 242.5,186.9 240.5,185.7 238.5,186.3 236.5,186.4 234.5,186.9 232.5,186.2 230.5,186.4 228.5,186.3 226.5,185.8 224.5,185.9 222.5,185.8 220.5,186.0 218.5,186.1 216.5,186.8 214.5,186.5 212.5,185.9 210.5,186.5 208.5,187.5 206.5,186.7 204.5,187.9 202.5,188.5 200.5,188.3 198.5,188.7 196.5,188.6 194.5,189.3 192.5,189.3 190.5,189.8 188.5,188.8 186.5,190.5 184.5,189.0 182.5,188.9 180.5,189.5 178.5,190.4 176.5,189.4 174.5,188.8 172.5,190.1 170.5,189.1 168.5,189.3 166.5,188.7 164.5,190.5 162.5,188.9 160.5,189.3 158.5,188.7 156.5,188.8 154.5,188.9 152.5,189.8 150.5,189.2 148.5,189.6 146.5,188.7 144.5,188.9 142.5,189.5 140.5,188.9 138.5,189.8 136.5,189.6 134.5,189.1 132.5,188.8 130.5,189.4 128.5,189.0 126.5,190.3 124.5,189.4 122.5,189.4 120.5,188.9 118.5,189.5 116.5,189.8 114.5,189.6 112.5,189.1 110.5,188.8 108.5,189.3 106.5,189.5 104.5,189.5 102.5,189.3 100.5,188.9 98.5,188.8 96.5,188.9 94.5,189.3"/>
<path d="M2075.5,297.7 L2075.5,256 Q2075.5,251.6 2080,251.6 L2122,251.6 L2122,297.7 Z" fill="#3a3d40" fill-opacity="0.9"/>
<rect x="122.75" y="67.2" width="1.5" height="231.3" fill="#1b1c1e"/>
<rect x="157.00" y="67.2" width="1.5" height="231.3" fill="#1b1c1e"/>
<rect x="191.26" y="67.2" width="1.5" height="231.3" fill="#1b1c1e"/>
<rect x="225.51" y="67.2" width="1.5" height="231.3" fill="#1b1c1e"/>
<rect x="259.77" y="67.2" width="1.5" height="231.3" fill="#1b1c1e"/>
<rect x="294.02" y="67.2" width="1.5" height="231.3" fill="#1b1c1e"/>
<rect x="328.27" y="67.2" width="1.5" height="231.3" fill="#1b1c1e"/>
<rect x="362.53" y="67.2" width="1.5" height="231.3" fill="#1b1c1e"/>
<rect x="396.78" y="67.2" width="1.5" height="231.3" fill="#1b1c1e"/>
<rect x="431.04" y="67.2" width="1.5" height="231.3" fill="#1b1c1e"/>
<rect x="465.29" y="67.2" width="1.5" height="231.3" fill="#1b1c1e"/>
<rect x="499.54" y="67.2" width="1.5" height="231.3" fill="#1b1c1e"/>
<rect x="533.80" y="67.2" width="1.5" height="231.3" fill="#1b1c1e"/>
<rect x="568.05" y="67.2" width="1.5" height="231.3" fill="#1b1c1e"/>
<rect x="602.31" y="67.2" width="1.5" height="231.3" fill="#1b1c1e"/>
<rect x="636.56" y="67.2" width="1.5" height="231.3" fill="#1b1c1e"/>
<rect x="670.81" y="67.2" width="1.5" height="231.3" fill="#1b1c1e"/>
<rect x="705.07" y="67.2" width="1.5" height="231.3" fill="#1b1c1e"/>
<rect x="739.32" y="67.2" width="1.5" height="231.3" fill="#1b1c1e"/>
<rect x="773.58" y="67.2" width="1.5" height="231.3" fill="#1b1c1e"/>
<rect x="807.83" y="67.2" width="1.5" height="231.3" fill="#1b1c1e"/>
<rect x="842.08" y="67.2" width="1.5" height="231.3" fill="#1b1c1e"/>
<rect x="876.34" y="67.2" width="1.5" height="231.3" fill="#1b1c1e"/>
<rect x="910.59" y="67.2" width="1.5" height="231.3" fill="#1b1c1e"/>
<rect x="944.85" y="67.2" width="1.5" height="231.3" fill="#1b1c1e"/>
<rect x="979.10" y="67.2" width="1.5" height="231.3" fill="#1b1c1e"/>
<rect x="1013.35" y="67.2" width="1.5" height="231.3" fill="#1b1c1e"/>
<rect x="1047.61" y="67.2" width="1.5" height="231.3" fill="#1b1c1e"/>
<rect x="1081.86" y="67.2" width="1.5" height="231.3" fill="#1b1c1e"/>
<rect x="1116.12" y="67.2" width="1.5" height="231.3" fill="#1b1c1e"/>
<rect x="1150.37" y="67.2" width="1.5" height="231.3" fill="#1b1c1e"/>
<rect x="1184.62" y="67.2" width="1.5" height="231.3" fill="#1b1c1e"/>
<rect x="1218.88" y="67.2" width="1.5" height="231.3" fill="#1b1c1e"/>
<rect x="1253.13" y="67.2" width="1.5" height="231.3" fill="#1b1c1e"/>
<rect x="1287.39" y="67.2" width="1.5" height="231.3" fill="#1b1c1e"/>
<rect x="1321.64" y="67.2" width="1.5" height="231.3" fill="#1b1c1e"/>
<rect x="1355.89" y="67.2" width="1.5" height="231.3" fill="#1b1c1e"/>
<rect x="1390.15" y="67.2" width="1.5" height="231.3" fill="#1b1c1e"/>
<rect x="1424.40" y="67.2" width="1.5" height="231.3" fill="#1b1c1e"/>
<rect x="1458.66" y="67.2" width="1.5" height="231.3" fill="#1b1c1e"/>
<rect x="1492.91" y="67.2" width="1.5" height="231.3" fill="#1b1c1e"/>
<rect x="1527.16" y="67.2" width="1.5" height="231.3" fill="#1b1c1e"/>
<rect x="1561.42" y="67.2" width="1.5" height="231.3" fill="#1b1c1e"/>
<rect x="1595.67" y="67.2" width="1.5" height="231.3" fill="#1b1c1e"/>
<rect x="1629.93" y="67.2" width="1.5" height="231.3" fill="#1b1c1e"/>
<rect x="1664.18" y="67.2" width="1.5" height="231.3" fill="#1b1c1e"/>
<rect x="1698.43" y="67.2" width="1.5" height="231.3" fill="#1b1c1e"/>
<rect x="1732.69" y="67.2" width="1.5" height="231.3" fill="#1b1c1e"/>
<rect x="1766.94" y="67.2" width="1.5" height="231.3" fill="#1b1c1e"/>
<rect x="1801.20" y="67.2" width="1.5" height="231.3" fill="#1b1c1e"/>
<rect x="1835.45" y="67.2" width="1.5" height="231.3" fill="#1b1c1e"/>
<rect x="1869.70" y="67.2" width="1.5" height="231.3" fill="#1b1c1e"/>
<rect x="1903.96" y="67.2" width="1.5" height="231.3" fill="#1b1c1e"/>
<rect x="1938.21" y="67.2" width="1.5" height="231.3" fill="#1b1c1e"/>
<rect x="1972.47" y="67.2" width="1.5" height="231.3" fill="#1b1c1e"/>
<rect x="2006.72" y="67.2" width="1.5" height="231.3" fill="#1b1c1e"/>
<rect x="2040.97" y="67.2" width="1.5" height="231.3" fill="#1b1c1e"/>
<rect x="2075.23" y="67.2" width="1.5" height="231.3" fill="#1b1c1e"/>
<rect x="2109.48" y="67.2" width="1.5" height="231.3" fill="#1b1c1e"/>
<rect x="96" y="67.2" width="1" height="231.3" fill="#1b1c1e"/>
<rect x="94.5" y="68" width="2028" height="1" fill="#1b1c1e"/>
<rect x="94.5" y="73.50" width="2028" height="1" fill="#1b1c1e"/>
<rect x="94.5" y="85.61" width="2028" height="1" fill="#1b1c1e"/>
<rect x="94.5" y="97.71" width="2028" height="1" fill="#1b1c1e"/>
<rect x="94.5" y="109.81" width="2028" height="1" fill="#1b1c1e"/>
<rect x="94.5" y="121.92" width="2028" height="1" fill="#1b1c1e"/>
<rect x="94.5" y="134.03" width="2028" height="1" fill="#1b1c1e"/>
<rect x="94.5" y="146.13" width="2028" height="1" fill="#1b1c1e"/>
<rect x="94.5" y="158.24" width="2028" height="1" fill="#1b1c1e"/>
<rect x="94.5" y="170.34" width="2028" height="1" fill="#1b1c1e"/>
<rect x="94.5" y="194.55" width="2028" height="1" fill="#1b1c1e"/>
<rect x="94.5" y="206.66" width="2028" height="1" fill="#1b1c1e"/>
<rect x="94.5" y="218.76" width="2028" height="1" fill="#1b1c1e"/>
<rect x="94.5" y="230.87" width="2028" height="1" fill="#1b1c1e"/>
<rect x="94.5" y="242.97" width="2028" height="1" fill="#1b1c1e"/>
<rect x="94.5" y="255.08" width="2028" height="1" fill="#1b1c1e"/>
<rect x="94.5" y="267.18" width="2028" height="1" fill="#1b1c1e"/>
<rect x="94.5" y="279.28" width="2028" height="1" fill="#1b1c1e"/>
<rect x="94.5" y="291.39" width="2028" height="1" fill="#1b1c1e"/>
<rect x="94.5" y="181.5" width="2028" height="1.5" fill="#5e5e62"/>
<rect x="1363.5" y="67.2" width="1.6" height="231.3" fill="#484848"/>
<text x="2078" y="89" font-size="20.5" fill="#fff" stroke="#000" stroke-width="2.2" stroke-linejoin="round" paint-order="stroke">ttt</text>
<text x="125" y="91.5" font-size="22.5" font-weight="bold" fill="#fff" stroke="#000" stroke-width="2.2" stroke-linejoin="round" paint-order="stroke">Lin</text>
<polygon points="159,75 177.7,75 168.4,93.5" fill="#fff" stroke="#000" stroke-width="1.2" paint-order="stroke"/>
<defs><linearGradient id="mg" x1="0" y1="0" x2="0" y2="1"><stop offset="0" stop-color="#e6e6e6"/><stop offset="0.5" stop-color="#c4c4c4"/><stop offset="1" stop-color="#d0d0d0"/></linearGradient></defs>
<path d="M1097,280 Q1097,278 1099,278 L1116,278 Q1118,278 1118,280 L1118,287 L1107,298.5 L1096,287 Z" fill="url(#mg)" stroke="#000" stroke-width="1" stroke-opacity="0.6"/>
<g stroke="#8b8e91" stroke-width="3.6" fill="none" stroke-linecap="butt"><path d="M2089.8,256.2 L2089.8,286 L2119.7,286"/><path d="M2079.9,266.2 L2109.8,266.2 L2109.8,295.8"/></g>
<text x="82.00" y="91.40" font-size="17.3" text-anchor="end" fill="#fff" font-weight="normal" stroke="#000" stroke-width="2.2" stroke-linejoin="round" paint-order="stroke">80</text>
<text x="82.00" y="115.75" font-size="17.3" text-anchor="end" fill="#fff" font-weight="normal" stroke="#000" stroke-width="2.2" stroke-linejoin="round" paint-order="stroke">60</text>
<text x="82.00" y="140.10" font-size="17.3" text-anchor="end" fill="#fff" font-weight="normal" stroke="#000" stroke-width="2.2" stroke-linejoin="round" paint-order="stroke">40</text>
<text x="82.00" y="164.45" font-size="17.3" text-anchor="end" fill="#fff" font-weight="normal" stroke="#000" stroke-width="2.2" stroke-linejoin="round" paint-order="stroke">20</text>
<text x="82.00" y="188.80" font-size="17.3" text-anchor="end" fill="#fff" font-weight="normal" stroke="#000" stroke-width="2.2" stroke-linejoin="round" paint-order="stroke">0</text>
<text x="82.00" y="213.15" font-size="17.3" text-anchor="end" fill="#fff" font-weight="normal" stroke="#000" stroke-width="2.2" stroke-linejoin="round" paint-order="stroke">-20</text>
<text x="82.00" y="237.50" font-size="17.3" text-anchor="end" fill="#fff" font-weight="normal" stroke="#000" stroke-width="2.2" stroke-linejoin="round" paint-order="stroke">-40</text>
<text x="82.00" y="261.85" font-size="17.3" text-anchor="end" fill="#fff" font-weight="normal" stroke="#000" stroke-width="2.2" stroke-linejoin="round" paint-order="stroke">-60</text>
<text x="82.00" y="286.20" font-size="17.3" text-anchor="end" fill="#fff" font-weight="normal" stroke="#000" stroke-width="2.2" stroke-linejoin="round" paint-order="stroke">-80</text>
<text x="82.00" y="310.55" font-size="17.3" text-anchor="end" fill="#fff" font-weight="normal" stroke="#000" stroke-width="2.2" stroke-linejoin="round" paint-order="stroke">-100</text>
<text x="89.20" y="327.10" font-size="17.3" text-anchor="middle" fill="#fff" font-weight="normal" stroke="#000" stroke-width="2.2" stroke-linejoin="round" paint-order="stroke">5</text>
<text x="128.62" y="327.10" font-size="17.3" text-anchor="middle" fill="#fff" font-weight="normal" stroke="#000" stroke-width="2.2" stroke-linejoin="round" paint-order="stroke">235</text>
<text x="177.46" y="327.10" font-size="17.3" text-anchor="middle" fill="#fff" font-weight="normal" stroke="#000" stroke-width="2.2" stroke-linejoin="round" paint-order="stroke">520</text>
<text x="228.87" y="327.10" font-size="17.3" text-anchor="middle" fill="#fff" font-weight="normal" stroke="#000" stroke-width="2.2" stroke-linejoin="round" paint-order="stroke">820</text>
<text x="283.70" y="327.10" font-size="17.3" text-anchor="middle" fill="#fff" font-weight="normal" stroke="#000" stroke-width="2.2" stroke-linejoin="round" paint-order="stroke">1.14k</text>
<text x="336.83" y="327.10" font-size="17.3" text-anchor="middle" fill="#fff" font-weight="normal" stroke="#000" stroke-width="2.2" stroke-linejoin="round" paint-order="stroke">1.45k</text>
<text x="396.81" y="327.10" font-size="17.3" text-anchor="middle" fill="#fff" font-weight="normal" stroke="#000" stroke-width="2.2" stroke-linejoin="round" paint-order="stroke">1.80k</text>
<text x="448.22" y="327.10" font-size="17.3" text-anchor="middle" fill="#fff" font-weight="normal" stroke="#000" stroke-width="2.2" stroke-linejoin="round" paint-order="stroke">2.10k</text>
<text x="508.20" y="327.10" font-size="17.3" text-anchor="middle" fill="#fff" font-weight="normal" stroke="#000" stroke-width="2.2" stroke-linejoin="round" paint-order="stroke">2.45k</text>
<text x="568.18" y="327.10" font-size="17.3" text-anchor="middle" fill="#fff" font-weight="normal" stroke="#000" stroke-width="2.2" stroke-linejoin="round" paint-order="stroke">2.80k</text>
<text x="628.16" y="327.10" font-size="17.3" text-anchor="middle" fill="#fff" font-weight="normal" stroke="#000" stroke-width="2.2" stroke-linejoin="round" paint-order="stroke">3.15k</text>
<text x="688.14" y="327.10" font-size="17.3" text-anchor="middle" fill="#fff" font-weight="normal" stroke="#000" stroke-width="2.2" stroke-linejoin="round" paint-order="stroke">3.50k</text>
<text x="756.69" y="327.10" font-size="17.3" text-anchor="middle" fill="#fff" font-weight="normal" stroke="#000" stroke-width="2.2" stroke-linejoin="round" paint-order="stroke">3.90k</text>
<text x="808.10" y="327.10" font-size="17.3" text-anchor="middle" fill="#fff" font-weight="normal" stroke="#000" stroke-width="2.2" stroke-linejoin="round" paint-order="stroke">4.20k</text>
<text x="876.65" y="327.10" font-size="17.3" text-anchor="middle" fill="#fff" font-weight="normal" stroke="#000" stroke-width="2.2" stroke-linejoin="round" paint-order="stroke">4.60k</text>
<text x="945.19" y="327.10" font-size="17.3" text-anchor="middle" fill="#fff" font-weight="normal" stroke="#000" stroke-width="2.2" stroke-linejoin="round" paint-order="stroke">5.00k</text>
<text x="1013.74" y="327.10" font-size="17.3" text-anchor="middle" fill="#fff" font-weight="normal" stroke="#000" stroke-width="2.2" stroke-linejoin="round" paint-order="stroke">5.40k</text>
<text x="1082.29" y="327.10" font-size="17.3" text-anchor="middle" fill="#fff" font-weight="normal" stroke="#000" stroke-width="2.2" stroke-linejoin="round" paint-order="stroke">5.80k</text>
<text x="1150.84" y="327.10" font-size="17.3" text-anchor="middle" fill="#fff" font-weight="normal" stroke="#000" stroke-width="2.2" stroke-linejoin="round" paint-order="stroke">6.20k</text>
<text x="1219.39" y="327.10" font-size="17.3" text-anchor="middle" fill="#fff" font-weight="normal" stroke="#000" stroke-width="2.2" stroke-linejoin="round" paint-order="stroke">6.60k</text>
<text x="1287.93" y="327.10" font-size="17.3" text-anchor="middle" fill="#fff" font-weight="normal" stroke="#000" stroke-width="2.2" stroke-linejoin="round" paint-order="stroke">7.00k</text>
<text x="1356.48" y="327.10" font-size="17.3" text-anchor="middle" fill="#fff" font-weight="normal" stroke="#000" stroke-width="2.2" stroke-linejoin="round" paint-order="stroke">7.40k</text>
<text x="1425.03" y="327.10" font-size="17.3" text-anchor="middle" fill="#fff" font-weight="normal" stroke="#000" stroke-width="2.2" stroke-linejoin="round" paint-order="stroke">7.80k</text>
<text x="1493.58" y="327.10" font-size="17.3" text-anchor="middle" fill="#fff" font-weight="normal" stroke="#000" stroke-width="2.2" stroke-linejoin="round" paint-order="stroke">8.20k</text>
<text x="1562.13" y="327.10" font-size="17.3" text-anchor="middle" fill="#fff" font-weight="normal" stroke="#000" stroke-width="2.2" stroke-linejoin="round" paint-order="stroke">8.60k</text>
<text x="1630.67" y="327.10" font-size="17.3" text-anchor="middle" fill="#fff" font-weight="normal" stroke="#000" stroke-width="2.2" stroke-linejoin="round" paint-order="stroke">9.00k</text>
<text x="1699.22" y="327.10" font-size="17.3" text-anchor="middle" fill="#fff" font-weight="normal" stroke="#000" stroke-width="2.2" stroke-linejoin="round" paint-order="stroke">9.40k</text>
<text x="1767.77" y="327.10" font-size="17.3" text-anchor="middle" fill="#fff" font-weight="normal" stroke="#000" stroke-width="2.2" stroke-linejoin="round" paint-order="stroke">9.80k</text>
<text x="1836.32" y="327.10" font-size="17.3" text-anchor="middle" fill="#fff" font-weight="normal" stroke="#000" stroke-width="2.2" stroke-linejoin="round" paint-order="stroke">10.20k</text>
<text x="1904.87" y="327.10" font-size="17.3" text-anchor="middle" fill="#fff" font-weight="normal" stroke="#000" stroke-width="2.2" stroke-linejoin="round" paint-order="stroke">10.60k</text>
<text x="1973.41" y="327.10" font-size="17.3" text-anchor="middle" fill="#fff" font-weight="normal" stroke="#000" stroke-width="2.2" stroke-linejoin="round" paint-order="stroke">11.00k</text>
<text x="2041.96" y="327.10" font-size="17.3" text-anchor="middle" fill="#fff" font-weight="normal" stroke="#000" stroke-width="2.2" stroke-linejoin="round" paint-order="stroke">11.40k</text>
<text x="2110.51" y="327.10" font-size="17.3" text-anchor="middle" fill="#fff" font-weight="normal" stroke="#000" stroke-width="2.2" stroke-linejoin="round" paint-order="stroke">11.80k</text>
<text x="1108.40" y="355.70" font-size="20" text-anchor="middle" fill="#fff" font-weight="normal" stroke="#000" stroke-width="2.2" stroke-linejoin="round" paint-order="stroke">Time (ms)</text>
<text transform="translate(31.8,182.8) rotate(-90)" x="0" y="0" font-size="19.5" text-anchor="middle" fill="#fff" stroke="#000" stroke-width="2.2" stroke-linejoin="round" paint-order="stroke">Level (%)</text>
<rect x="89" y="371" width="2039" height="1164" fill="#333438"/>
<rect x="93" y="372" width="2031" height="1159" fill="#000"/>
<defs><clipPath id="logclip"><rect x="93" y="372" width="2031.5" height="1159"/></clipPath></defs>
<g clip-path="url(#logclip)">
<polyline fill="none" stroke="#c4275a" stroke-width="6.5" stroke-linejoin="miter" stroke-miterlimit="1.5" points="91.3,699.8 93.7,664.2 96.3,665.8 98.7,691.8 101.3,700.5 103.7,673.2 106.3,673.2 108.7,701.1 111.3,704.8 113.7,677.0 116.3,684.2 118.7,705.8 121.3,704.8 123.7,683.2 126.3,665.2 128.7,704.2 131.3,719.2 133.7,665.8 136.3,683.2 138.7,719.2 141.3,704.8 143.7,683.2 146.3,683.2 148.7,701.1 151.3,701.1 153.7,684.2 156.3,684.2 158.7,696.8 161.3,696.8 163.7,670.2 166.3,670.8 168.7,701.8 171.3,702.4 173.7,677.2 176.3,670.2 178.7,708.8 181.3,709.2 183.7,668.9 186.3,668.2 188.7,722.4 191.3,722.8 193.7,685.8 196.3,684.2 198.7,704.8 201.3,696.8 203.7,684.2 206.3,690.8 208.7,714.2"/>
<polyline fill="none" stroke="#c4275a" stroke-width="6.5" stroke-linejoin="miter" stroke-miterlimit="1.5" points="328.8,1123.8 331.2,1087.2 333.8,1097.8 336.2,1123.8 338.8,1129.8 341.2,1097.8 343.8,1126.2 346.2,1141.8 348.8,1151.8 351.2,1109.2 353.8,1111.2 356.2,1155.8 358.8,1155.8 361.2,1125.2 363.8,1125.2 366.2,1152.8 368.8,1145.2 371.2,1169.8 373.8,1168.8 376.2,1145.2 378.8,1166.8 381.2,1115.8 383.8,1115.8 386.2,1149.8 388.8,1148.2 391.2,1128.2 393.8,1134.2 396.2,1099.2 398.8,1095.2 401.2,1126.8 403.8,1126.8 406.2,1095.2 408.8,1114.2 411.2,1157.8 413.8,1162.8 416.2,1123.2 418.8,1118.8 421.2,1163.8 423.8,1148.2 426.2,1118.8 428.8,1143.8 431.2,1179.8 433.8,1151.8 436.2,1136.2 438.8,1133.2 441.2,1151.8 443.8,1133.2 446.2,1182.8 448.8,1182.8 451.2,1140.8 453.8,1142.2 456.2,1184.2 458.8,1193.8 461.2,1153.2 463.8,1164.2 466.2,1193.8 468.8,1168.8 471.2,1161.2 473.8,1151.0 476.2,1176.8 478.8,1179.8 481.2,1151.0 483.8,1140.8 486.2,1191.8 488.8,1191.8 491.2,1140.8 493.8,1167.2 496.2,1177.8 498.8,1174.8 501.2,1168.2 503.8,1134.2 506.2,1202.8 508.8,1202.8 511.2,1134.2 513.8,1159.2 516.2,1202.8 518.8,1163.8 521.2,1147.2 523.8,1148.2 526.2,1184.2 528.8,1184.2 531.2,1159.2"/>
<polyline fill="none" stroke="#c4275a" stroke-width="6.5" stroke-linejoin="miter" stroke-miterlimit="1.5" points="528.8,1185.0 531.2,1161.8 533.8,1165.4 536.2,1207.6 538.8,1180.3 541.2,1161.8 543.8,1160.6 546.2,1180.3 548.8,1177.9 551.2,1142.8 553.7,1155.9 556.1,1177.9 558.7,1191.0 561.1,1158.3 563.7,1153.5 566.1,1191.0 568.7,1175.5 571.1,1147.6 573.7,1158.3 576.1,1194.5 578.7,1175.5 581.1,1158.3 583.7,1147.6 586.1,1175.5 588.7,1168.4 591.1,1147.6 593.6,1157.1 596.0,1169.6 598.6,1175.5 601.0,1157.1 603.6,1148.8 606.0,1185.0 608.6,1187.4 611.0,1148.8 613.6,1145.2 616.0,1175.5 618.6,1175.5 621.0,1144.0 623.6,1136.9 626.0,1175.5 628.6,1181.5 631.0,1135.7 631.9,1140.4 634.3,1232.5 635.2,1232.5 637.6,1158.3 640.2,1158.3 642.6,1198.1 645.2,1183.8 647.6,1151.1 650.2,1151.1 652.6,1172.0 655.2,1164.2 657.6,1181.5 660.2,1193.3 662.6,1166.6 665.1,1161.8 667.5,1198.1 670.1,1194.5 672.5,1160.6 675.1,1144.0 677.5,1193.3 680.1,1182.6 682.5,1135.7 685.1,1140.4 687.5,1201.6 690.1,1201.6 692.5,1167.8 695.1,1175.5 697.5,1146.4 700.1,1145.2 702.5,1174.3 703.4,1145.2 705.8,1211.1 706.9,1211.1 709.3,1160.6 711.9,1163.0 714.3,1201.6 716.9,1201.6 719.3,1165.4 721.9,1166.6 724.3,1191.0 726.9,1191.0 729.3,1164.2 733.1,1163.3"/>
<polyline fill="none" stroke="#c4275a" stroke-width="6.5" stroke-linejoin="miter" stroke-miterlimit="1.5" points="743.8,744.8 746.2,701.2 748.8,697.8 751.2,723.8 753.8,716.8 756.2,691.2 758.8,669.2 761.2,721.8 763.8,721.8 766.2,668.2 768.8,682.2 771.2,705.8 773.8,722.8 776.2,666.2 778.8,666.2 781.2,722.8 781.8,696.8 784.2,653.2 784.8,653.2 787.2,706.8 788.8,705.8 791.2,673.2 793.8,671.2 796.2,703.8 798.8,701.8 801.2,671.2 803.8,663.8 806.2,701.8 806.8,696.8 809.2,663.8 810.8,670.2 813.2,716.8 814.8,717.8 817.2,673.2 818.8,672.2 821.2,716.8 822.8,706.8 825.2,673.2 826.8,655.8 829.2,705.8 831.8,706.8 834.2,655.8 835.8,670.2 838.2,708.8 840.8,704.8 843.2,670.2 844.8,686.2 847.2,718.8 849.8,718.8 852.2,688.2 853.8,685.2 856.2,698.8 858.8,706.8 861.2,685.2 861.8,688.2 864.2,732.8"/>
<polyline fill="none" stroke="#c4275a" stroke-width="6.5" stroke-linejoin="miter" stroke-miterlimit="1.5" points="984.2,1131.5 986.6,1116.0 989.7,1114.6 992.1,1142.5 995.2,1143.9 997.6,1114.6 1000.7,1117.4 1003.1,1161.7 1006.2,1160.4 1008.6,1120.1 1011.7,1135.2 1014.1,1159.0 1017.2,1146.6 1019.6,1128.4 1022.7,1135.2 1025.1,1167.2 1028.2,1186.5 1030.6,1144.9 1033.7,1133.9 1036.1,1186.5 1039.2,1165.9 1041.6,1132.5 1044.7,1153.1 1047.1,1167.2 1050.2,1172.7 1052.6,1149.0 1055.7,1149.0 1058.1,1178.2 1061.2,1190.6 1063.6,1140.7 1066.7,1138.0 1069.1,1190.6 1072.2,1189.2 1074.6,1146.2 1077.7,1144.9 1080.1,1203.0 1083.2,1203.0 1085.6,1143.5 1088.7,1149.0 1091.1,1201.6 1094.2,1201.6 1096.6,1140.7 1099.7,1146.2 1102.1,1182.4 1105.2,1182.4 1107.6,1143.5 1110.7,1132.5 1113.1,1186.5 1116.2,1186.5 1118.6,1131.1 1121.7,1153.1 1124.1,1172.7 1127.2,1179.6 1129.6,1144.9 1132.7,1139.4 1135.1,1181.0 1138.2,1161.7 1140.6,1133.9 1143.7,1133.9 1146.1,1168.6 1149.2,1149.0 1151.6,1192.0 1154.7,1192.0 1157.1,1146.2 1158.8,1146.2 1161.2,1198.9"/>
<polyline fill="none" stroke="#c4275a" stroke-width="6.5" stroke-linejoin="miter" stroke-miterlimit="1.5" points="1153.8,1178.3 1156.2,1150.1 1158.7,1146.1 1161.1,1199.7 1163.8,1199.7 1166.2,1136.7 1168.8,1136.7 1171.2,1175.6 1173.8,1174.3 1176.2,1152.7 1178.8,1151.4 1181.2,1194.3 1183.9,1194.3 1186.3,1163.4 1188.8,1173.0 1191.2,1152.7 1193.9,1169.0 1196.3,1131.4 1198.8,1131.4 1201.2,1173.0 1203.9,1173.0 1206.3,1134.7 1208.9,1136.7 1211.3,1156.9 1213.8,1136.7 1216.2,1185.0 1218.9,1185.0 1221.3,1147.4 1223.8,1146.1 1226.2,1181.0 1228.8,1164.9 1231.2,1156.7 1233.8,1158.3 1236.2,1136.7 1238.8,1138.0 1241.2,1182.3 1243.9,1183.7 1246.3,1147.4 1248.8,1147.4 1251.2,1185.0 1253.8,1203.7 1256.2,1147.4 1258.8,1147.4 1261.2,1203.7 1263.8,1171.6 1266.2,1159.4 1268.9,1170.3 1271.3,1126.0 1273.8,1126.0 1276.2,1169.0 1278.9,1170.3 1281.3,1156.7 1283.8,1155.4 1286.2,1177.0 1288.8,1181.0 1291.2,1148.7 1293.9,1170.1 1296.3,1181.0 1298.8,1171.6 1301.2,1150.1 1303.7,1150.1 1306.1,1185.0 1308.8,1198.4 1311.2,1146.7 1313.8,1146.7 1316.2,1198.4 1318.7,1181.0 1321.1,1168.8 1323.8,1163.4 1326.2,1202.4 1328.7,1202.4 1331.1,1151.4 1333.8,1151.4 1336.2,1173.0 1338.8,1187.7 1341.2,1158.1 1343.8,1158.1 1346.2,1197.0 1348.8,1211.7 1351.2,1176.8 1353.7,1148.7 1356.1,1211.7 1358.8,1186.3 1361.2,1155.4 1363.7,1162.1 1366.1,1189.0 1368.7,1203.7 1371.1,1156.7 1373.8,1156.7 1376.2,1203.7 1378.7,1177.0 1381.1,1156.7 1383.8,1143.4 1386.2,1177.0 1388.7,1178.3 1391.1,1143.4 1393.8,1152.7 1396.2,1190.3 1398.8,1190.3 1401.2,1152.7 1403.7,1151.4 1406.1,1167.6 1408.8,1167.6 1411.2,1129.4 1413.7,1130.0 1416.1,1183.7 1418.8,1183.7 1421.2,1143.4 1423.7,1143.4 1426.1,1183.7 1427.1,1197.0 1429.5,1155.4"/>
<polyline fill="none" stroke="#c4275a" stroke-width="6.5" stroke-linejoin="miter" stroke-miterlimit="1.5" points="1438.8,723.8 1441.2,708.2 1443.8,707.2 1446.2,723.8 1448.8,721.8 1451.2,693.2 1453.8,691.2 1456.2,716.8 1458.8,714.8 1461.2,688.2 1463.8,688.2 1466.2,718.8 1468.8,718.8 1471.2,693.2 1473.8,693.2 1476.2,707.8 1478.8,707.8 1481.2,690.2 1483.8,676.2 1486.2,707.8 1488.8,706.8 1491.2,672.2 1493.8,667.8 1496.2,708.8 1498.8,708.8 1501.2,678.2 1503.8,686.2 1506.2,705.8 1506.3,705.8 1508.7,652.2 1508.8,652.2 1511.2,705.8 1513.8,708.8 1516.2,664.2 1518.8,664.2 1521.2,708.8 1522.8,724.8 1525.2,681.2 1526.8,681.2 1529.2,710.8 1531.8,710.8 1534.2,681.2 1536.8,672.2 1539.2,708.8 1541.8,708.8 1544.2,656.8 1544.8,656.8 1547.2,702.8 1548.8,702.8 1551.2,683.2 1553.8,681.2 1556.2,706.8 1558.8,707.8 1561.2,685.2 1563.8,677.2 1566.2,705.8 1568.8,714.8 1571.2,690.2 1573.8,713.8 1576.2,663.2 1578.8,663.2 1581.2,704.8 1582.8,693.2 1585.2,736.8"/>
<polyline fill="none" stroke="#c4275a" stroke-width="6.5" stroke-linejoin="miter" stroke-miterlimit="1.5" points="1666.3,1048.6 1668.7,1043.2 1671.3,1046.8 1673.7,1083.1 1676.3,1083.1 1678.7,1064.6 1681.2,1067.0 1683.6,1078.3 1686.2,1069.4 1688.6,1110.4 1691.2,1112.8 1693.6,1076.5 1696.2,1076.5 1698.6,1112.8 1701.2,1123.4 1703.6,1077.7 1706.2,1095.5 1708.6,1146.0 1711.2,1146.0 1713.6,1095.5 1716.2,1128.8 1718.6,1161.5 1721.2,1161.5 1723.6,1114.5 1726.1,1114.5 1728.5,1161.5 1731.1,1179.3 1733.5,1125.2 1736.1,1125.2 1738.5,1154.3 1741.1,1153.1 1743.5,1141.8 1746.1,1152.0 1748.5,1119.3 1751.1,1108.0 1753.5,1147.2 1756.1,1138.3 1758.5,1179.3 1761.1,1168.0 1763.5,1197.1 1766.0,1185.2 1768.4,1147.8 1771.0,1145.4 1773.4,1176.9 1776.0,1176.9 1778.4,1147.8 1781.0,1165.6 1783.4,1185.2 1786.0,1192.3 1788.4,1170.3 1791.0,1190.0 1793.4,1150.1 1796.0,1156.1 1798.4,1192.3 1801.0,1203.0 1803.4,1157.3 1805.9,1156.1 1808.3,1203.0 1810.9,1201.8 1813.3,1147.8 1815.9,1147.8 1818.3,1179.3 1820.9,1179.3 1823.3,1147.8 1825.9,1147.8 1828.3,1193.5 1830.9,1193.5 1833.3,1150.1 1835.9,1153.7 1838.3,1188.8 1840.9,1179.3 1843.3,1152.5 1845.9,1152.5 1848.3,1182.8 1850.8,1198.3 1853.2,1165.6 1855.8,1166.8 1858.2,1198.3 1860.8,1178.1 1863.2,1173.9 1865.8,1172.1 1868.2,1162.0 1870.8,1160.8 1873.2,1179.3 1875.8,1179.3 1878.2,1159.6 1880.8,1160.8 1883.2,1188.8 1885.8,1188.8 1888.2,1170.3 1890.7,1180.5 1893.1,1140.6 1895.7,1140.6 1898.1,1184.0"/>
<polyline fill="none" stroke="#c4275a" stroke-width="6.5" stroke-linejoin="miter" stroke-miterlimit="1.5" points="1893.8,1184.0 1896.2,1140.6 1898.8,1152.6 1901.2,1187.2 1903.8,1187.2 1906.2,1152.6 1908.7,1142.8 1911.1,1168.8 1913.7,1172.0 1916.1,1141.7 1918.7,1141.7 1921.1,1205.6 1923.7,1205.6 1926.1,1154.7 1928.7,1154.7 1931.1,1172.0 1931.7,1185.0 1934.1,1128.7 1936.0,1128.7 1938.4,1185.0 1940.4,1184.0 1942.8,1162.3 1944.7,1160.1 1947.1,1185.0 1949.7,1184.0 1952.1,1136.3 1954.7,1136.3 1957.1,1181.8 1959.6,1181.8 1962.0,1135.2 1964.6,1135.2 1967.0,1182.9 1969.6,1188.3 1972.0,1141.7 1974.6,1159.1 1977.0,1194.8 1979.6,1194.8 1982.0,1147.1 1984.6,1147.1 1987.0,1176.4 1989.5,1179.6 1991.9,1158.0 1994.5,1149.3 1996.9,1184.0 1999.5,1184.0 2001.9,1149.3 2004.5,1153.6 2006.9,1180.7 2009.5,1173.1 2011.9,1153.6 2014.4,1161.2 2016.8,1194.8 2019.4,1194.8 2021.8,1156.9 2024.4,1156.9 2026.8,1192.6 2029.4,1192.6 2031.8,1120.1 2034.4,1120.1 2036.8,1185.0 2039.3,1185.0 2041.7,1152.6 2044.3,1153.6 2046.7,1189.4 2049.3,1189.4 2051.7,1153.6 2054.3,1139.6 2056.7,1182.9 2059.3,1187.2 2061.7,1139.6 2064.3,1148.2 2066.7,1187.2 2069.2,1171.0 2071.6,1137.4 2072.5,1137.4 2074.9,1208.9 2076.8,1208.9 2079.2,1156.9 2081.8,1158.0 2084.2,1168.8 2086.8,1180.7 2089.2,1138.5 2091.8,1138.5 2094.2,1186.1 2096.7,1186.1 2099.1,1159.1 2101.7,1136.3 2104.1,1184.0 2106.7,1192.6 2109.1,1136.3 2111.7,1145.0 2114.1,1193.7 2116.7,1193.7 2119.1,1145.0 2121.7,1149.3 2124.1,1188.3 2123.9,1188.3 2126.3,1149.3"/>
<polyline fill="none" stroke="#c4275a" stroke-width="9" stroke-linejoin="miter" stroke-miterlimit="2" points="197.1,689.7 202.7,693.1 202.0,699.6 206.2,705.0 207.0,710.0 207.5,715.1 210.8,719.5 210.3,725.0 210.9,730.2 211.3,735.5 217.0,740.0 217.5,746.0 220.4,751.4 217.5,757.8 219.5,762.9 224.7,767.5 220.2,774.0 221.3,779.5 224.1,784.7 225.3,790.1 228.8,794.7 230.5,799.5 228.2,805.0 231.8,809.6 231.8,814.7 232.3,819.8 234.4,824.6 232.6,830.0 233.6,834.9 232.0,840.5 235.2,845.7 235.8,851.5 238.0,857.0 239.1,861.7 242.2,865.6 245.3,869.7 242.1,875.2 243.1,879.8 245.0,884.2 246.8,888.7 250.1,892.7 251.8,897.0 252.6,901.5 255.1,905.5 252.3,911.0 255.5,914.7 255.6,920.9 260.7,924.8 258.7,930.1 260.7,934.3 266.8,937.1 267.3,942.4 265.0,948.8 269.2,952.9 267.8,958.6 272.6,962.3 275.9,966.5 274.2,972.2 274.4,976.9 278.3,980.7 280.4,985.0 279.9,989.6 279.5,997.2 283.5,1002.3 288.3,1006.8 288.7,1012.2 290.6,1017.3 291.9,1022.0 289.6,1028.4 294.9,1031.9 294.7,1037.5 297.2,1042.1 300.5,1046.5 298.7,1051.7 303.5,1055.0 301.8,1060.2 306.1,1063.7 305.7,1068.5 307.9,1072.0 310.4,1075.8 309.7,1082.0 313.3,1085.0 318.6,1087.1 316.8,1092.6 322.1,1095.5 322.6,1100.2 321.5,1105.4 324.3,1109.5 330.9,1112.5 330.4,1120.4 336.9,1122.4 339.0,1126.8 338.7,1132.5 342.5,1136.0"/>
<polyline fill="none" stroke="#c4275a" stroke-width="5" stroke-linejoin="round" stroke-linecap="butt" points="223.0,770.0 223.0,806.0"/>
<polyline fill="none" stroke="#c4275a" stroke-width="5" stroke-linejoin="round" stroke-linecap="butt" points="259.0,935.0 259.0,897.0"/>
<polyline fill="none" stroke="#c4275a" stroke-width="5.5" stroke-linejoin="round" stroke-linecap="butt" points="729.5,1178.0 731.5,1070.0 733.0,930.0 735.0,790.0 737.5,745.0 740.0,725.0 744.0,706.0 748.0,694.0"/>
<polyline fill="none" stroke="#c4275a" stroke-width="9" stroke-linejoin="miter" stroke-miterlimit="2" points="861.0,699.8 862.2,704.8 864.5,709.5 865.4,714.5 863.5,720.1 866.5,724.7 865.4,730.1 867.8,734.8 868.2,739.8 870.3,745.4 873.9,750.0 874.2,755.1 873.2,760.3 878.1,764.7 879.0,769.3 876.3,775.8 878.5,780.6 883.4,784.6 885.3,789.5 883.6,795.3 883.3,800.0 888.6,803.6 885.1,809.0 886.4,813.4 888.9,817.6 891.1,822.3 894.1,826.7 895.6,831.5 891.4,837.9 897.0,841.0 895.8,846.4 899.9,850.0 898.1,855.5 900.6,859.6 903.5,863.7 905.3,868.0 903.2,873.2 907.9,877.4 907.9,882.5 906.8,887.7 906.0,893.3 909.1,897.2 912.7,901.0 910.9,906.9 916.7,910.0 919.3,915.2 919.3,921.1 919.8,926.9 923.8,930.5 925.0,935.3 925.9,940.2 926.6,945.1 930.1,949.1 929.6,953.8 927.4,959.0 927.8,963.6 930.6,967.7 931.6,972.3 933.4,976.6 937.2,980.4 939.0,984.8 940.1,988.7 937.9,996.1 941.6,1000.2 940.9,1005.1 947.4,1008.6 944.7,1013.9 946.5,1018.3 946.0,1023.2 949.3,1027.1 947.1,1033.0 954.0,1035.3 953.1,1040.7 953.9,1045.9 956.3,1050.7 960.4,1054.4 963.6,1058.1 964.9,1063.8 966.1,1069.5 971.1,1074.1 970.2,1079.9 970.0,1085.6 971.2,1091.0 974.9,1095.8 974.6,1101.3 976.1,1106.1 979.6,1110.2 982.0,1115.0 985.9,1118.8 988.0,1123.8"/>
<polyline fill="none" stroke="#c4275a" stroke-width="5.8" stroke-linejoin="round" stroke-linecap="butt" points="1432.0,1195.0 1433.0,1100.0 1434.0,950.0 1435.0,800.0 1438.5,740.0 1440.0,725.0 1443.0,715.0"/>
<polyline fill="none" stroke="#c4275a" stroke-width="9" stroke-linejoin="miter" stroke-miterlimit="2" points="1581.5,700.0 1581.6,705.0 1585.1,709.9 1582.0,715.0 1580.2,720.2 1581.2,725.1 1582.3,730.1 1584.6,734.8 1584.7,740.5 1587.5,745.1 1589.8,749.9 1589.0,755.2 1594.1,759.7 1590.7,765.2 1595.6,769.7 1592.8,775.1 1594.1,780.0 1596.6,784.7 1594.8,790.2 1597.0,795.0 1599.4,795.1 1598.5,800.5 1603.2,804.9 1605.5,809.7 1604.6,814.9 1604.2,819.9 1608.5,823.1 1610.4,827.2 1607.8,832.5 1610.0,837.4 1611.9,842.3 1609.9,847.7 1614.0,852.3 1612.6,857.7 1616.2,862.7 1615.7,868.4 1614.3,874.2 1614.6,880.2 1616.5,885.2 1621.0,889.3 1621.6,894.8 1624.8,899.3 1627.5,903.1 1627.1,908.1 1626.9,913.1 1628.5,917.2 1631.0,922.6 1631.3,928.6 1636.9,933.0 1639.2,938.5 1639.2,944.6 1641.8,949.7 1644.2,953.8 1645.3,958.5 1646.2,963.3 1649.0,967.2 1651.1,972.0 1649.0,977.7 1649.2,983.0 1653.4,987.4 1656.6,992.0 1657.9,997.0 1653.9,1003.1 1659.9,1007.1 1657.0,1013.0 1658.9,1018.0 1662.9,1021.1 1663.4,1026.7 1670.4,1028.9 1670.7,1033.5 1669.9,1038.3 1673.4,1042.2 1669.8,1047.6 1672.7,1051.6"/>
</g>
<rect x="122.75" y="372" width="1.5" height="1159" fill="#1b1c1e"/>
<rect x="157.00" y="372" width="1.5" height="1159" fill="#1b1c1e"/>
<rect x="191.26" y="372" width="1.5" height="1159" fill="#1b1c1e"/>
<rect x="225.51" y="372" width="1.5" height="1159" fill="#1b1c1e"/>
<rect x="259.77" y="372" width="1.5" height="1159" fill="#1b1c1e"/>
<rect x="294.02" y="372" width="1.5" height="1159" fill="#1b1c1e"/>
<rect x="328.27" y="372" width="1.5" height="1159" fill="#1b1c1e"/>
<rect x="362.53" y="372" width="1.5" height="1159" fill="#1b1c1e"/>
<rect x="396.78" y="372" width="1.5" height="1159" fill="#1b1c1e"/>
<rect x="431.04" y="372" width="1.5" height="1159" fill="#1b1c1e"/>
<rect x="465.29" y="372" width="1.5" height="1159" fill="#1b1c1e"/>
<rect x="499.54" y="372" width="1.5" height="1159" fill="#1b1c1e"/>
<rect x="533.80" y="372" width="1.5" height="1159" fill="#1b1c1e"/>
<rect x="568.05" y="372" width="1.5" height="1159" fill="#1b1c1e"/>
<rect x="602.31" y="372" width="1.5" height="1159" fill="#1b1c1e"/>
<rect x="636.56" y="372" width="1.5" height="1159" fill="#1b1c1e"/>
<rect x="670.81" y="372" width="1.5" height="1159" fill="#1b1c1e"/>
<rect x="705.07" y="372" width="1.5" height="1159" fill="#1b1c1e"/>
<rect x="739.32" y="372" width="1.5" height="1159" fill="#1b1c1e"/>
<rect x="773.58" y="372" width="1.5" height="1159" fill="#1b1c1e"/>
<rect x="807.83" y="372" width="1.5" height="1159" fill="#1b1c1e"/>
<rect x="842.08" y="372" width="1.5" height="1159" fill="#1b1c1e"/>
<rect x="876.34" y="372" width="1.5" height="1159" fill="#1b1c1e"/>
<rect x="910.59" y="372" width="1.5" height="1159" fill="#1b1c1e"/>
<rect x="944.85" y="372" width="1.5" height="1159" fill="#1b1c1e"/>
<rect x="979.10" y="372" width="1.5" height="1159" fill="#1b1c1e"/>
<rect x="1013.35" y="372" width="1.5" height="1159" fill="#1b1c1e"/>
<rect x="1047.61" y="372" width="1.5" height="1159" fill="#1b1c1e"/>
<rect x="1081.86" y="372" width="1.5" height="1159" fill="#1b1c1e"/>
<rect x="1116.12" y="372" width="1.5" height="1159" fill="#1b1c1e"/>
<rect x="1150.37" y="372" width="1.5" height="1159" fill="#1b1c1e"/>
<rect x="1184.62" y="372" width="1.5" height="1159" fill="#1b1c1e"/>
<rect x="1218.88" y="372" width="1.5" height="1159" fill="#1b1c1e"/>
<rect x="1253.13" y="372" width="1.5" height="1159" fill="#1b1c1e"/>
<rect x="1287.39" y="372" width="1.5" height="1159" fill="#1b1c1e"/>
<rect x="1321.64" y="372" width="1.5" height="1159" fill="#1b1c1e"/>
<rect x="1355.89" y="372" width="1.5" height="1159" fill="#1b1c1e"/>
<rect x="1390.15" y="372" width="1.5" height="1159" fill="#1b1c1e"/>
<rect x="1424.40" y="372" width="1.5" height="1159" fill="#1b1c1e"/>
<rect x="1458.66" y="372" width="1.5" height="1159" fill="#1b1c1e"/>
<rect x="1492.91" y="372" width="1.5" height="1159" fill="#1b1c1e"/>
<rect x="1527.16" y="372" width="1.5" height="1159" fill="#1b1c1e"/>
<rect x="1561.42" y="372" width="1.5" height="1159" fill="#1b1c1e"/>
<rect x="1595.67" y="372" width="1.5" height="1159" fill="#1b1c1e"/>
<rect x="1629.93" y="372" width="1.5" height="1159" fill="#1b1c1e"/>
<rect x="1664.18" y="372" width="1.5" height="1159" fill="#1b1c1e"/>
<rect x="1698.43" y="372" width="1.5" height="1159" fill="#1b1c1e"/>
<rect x="1732.69" y="372" width="1.5" height="1159" fill="#1b1c1e"/>
<rect x="1766.94" y="372" width="1.5" height="1159" fill="#1b1c1e"/>
<rect x="1801.20" y="372" width="1.5" height="1159" fill="#1b1c1e"/>
<rect x="1835.45" y="372" width="1.5" height="1159" fill="#1b1c1e"/>
<rect x="1869.70" y="372" width="1.5" height="1159" fill="#1b1c1e"/>
<rect x="1903.96" y="372" width="1.5" height="1159" fill="#1b1c1e"/>
<rect x="1938.21" y="372" width="1.5" height="1159" fill="#1b1c1e"/>
<rect x="1972.47" y="372" width="1.5" height="1159" fill="#1b1c1e"/>
<rect x="2006.72" y="372" width="1.5" height="1159" fill="#1b1c1e"/>
<rect x="2040.97" y="372" width="1.5" height="1159" fill="#1b1c1e"/>
<rect x="2075.23" y="372" width="1.5" height="1159" fill="#1b1c1e"/>
<rect x="2109.48" y="372" width="1.5" height="1159" fill="#1b1c1e"/>
<rect x="93" y="507.65" width="2031" height="1.5" fill="#1b1c1e"/>
<rect x="93" y="647.65" width="2031" height="1.5" fill="#1b1c1e"/>
<rect x="93" y="787.65" width="2031" height="1.5" fill="#1b1c1e"/>
<rect x="93" y="927.65" width="2031" height="1.5" fill="#1b1c1e"/>
<rect x="93" y="1067.65" width="2031" height="1.5" fill="#1b1c1e"/>
<rect x="93" y="1207.65" width="2031" height="1.5" fill="#1b1c1e"/>
<rect x="93" y="1347.65" width="2031" height="1.5" fill="#1b1c1e"/>
<rect x="93" y="1487.65" width="2031" height="1.5" fill="#1b1c1e"/>
<rect x="93" y="648.2" width="2031" height="1.6" fill="#484848"/>
<rect x="89" y="1189" width="2039" height="1.6" fill="#484848"/>
<rect x="1363.5" y="372" width="1.6" height="1159" fill="#484848"/>
<rect x="1508.5" y="372" width="1.6" height="1159" fill="#484848"/>
<text x="125" y="398.1" font-size="22.5" font-weight="bold" fill="#fff" stroke="#000" stroke-width="2.2" stroke-linejoin="round" paint-order="stroke">Log</text>
<polygon points="166.5,381.3 185.5,381.3 176,400.2" fill="#fff" stroke="#000" stroke-width="1.2" paint-order="stroke"/>
<text x="2042.5" y="399.6" font-size="22.5" font-weight="bold" fill="#fff" stroke="#000" stroke-width="2.2" stroke-linejoin="round" paint-order="stroke">ttt</text>
<polygon points="2069.2,383 2088.5,383 2078.8,402.4" fill="#fff" stroke="#000" stroke-width="1.2" paint-order="stroke"/>
<text x="82.00" y="513.20" font-size="17.3" text-anchor="end" fill="#fff" font-weight="normal" stroke="#000" stroke-width="2.2" stroke-linejoin="round" paint-order="stroke">-12</text>
<text x="82.00" y="653.20" font-size="17.3" text-anchor="end" fill="#fff" font-weight="normal" stroke="#000" stroke-width="2.2" stroke-linejoin="round" paint-order="stroke">-24</text>
<text x="82.00" y="793.20" font-size="17.3" text-anchor="end" fill="#fff" font-weight="normal" stroke="#000" stroke-width="2.2" stroke-linejoin="round" paint-order="stroke">-36</text>
<text x="82.00" y="933.20" font-size="17.3" text-anchor="end" fill="#fff" font-weight="normal" stroke="#000" stroke-width="2.2" stroke-linejoin="round" paint-order="stroke">-48</text>
<text x="82.00" y="1073.20" font-size="17.3" text-anchor="end" fill="#fff" font-weight="normal" stroke="#000" stroke-width="2.2" stroke-linejoin="round" paint-order="stroke">-60</text>
<text x="82.00" y="1213.20" font-size="17.3" text-anchor="end" fill="#fff" font-weight="normal" stroke="#000" stroke-width="2.2" stroke-linejoin="round" paint-order="stroke">-72</text>
<text x="82.00" y="1353.20" font-size="17.3" text-anchor="end" fill="#fff" font-weight="normal" stroke="#000" stroke-width="2.2" stroke-linejoin="round" paint-order="stroke">-84</text>
<text x="82.00" y="1493.20" font-size="17.3" text-anchor="end" fill="#fff" font-weight="normal" stroke="#000" stroke-width="2.2" stroke-linejoin="round" paint-order="stroke">-96</text>
<text x="89.20" y="1557.10" font-size="17.3" text-anchor="middle" fill="#fff" font-weight="normal" stroke="#000" stroke-width="2.2" stroke-linejoin="round" paint-order="stroke">5</text>
<text x="128.62" y="1557.10" font-size="17.3" text-anchor="middle" fill="#fff" font-weight="normal" stroke="#000" stroke-width="2.2" stroke-linejoin="round" paint-order="stroke">235</text>
<text x="177.46" y="1557.10" font-size="17.3" text-anchor="middle" fill="#fff" font-weight="normal" stroke="#000" stroke-width="2.2" stroke-linejoin="round" paint-order="stroke">520</text>
<text x="228.87" y="1557.10" font-size="17.3" text-anchor="middle" fill="#fff" font-weight="normal" stroke="#000" stroke-width="2.2" stroke-linejoin="round" paint-order="stroke">820</text>
<text x="283.70" y="1557.10" font-size="17.3" text-anchor="middle" fill="#fff" font-weight="normal" stroke="#000" stroke-width="2.2" stroke-linejoin="round" paint-order="stroke">1.14k</text>
<text x="336.83" y="1557.10" font-size="17.3" text-anchor="middle" fill="#fff" font-weight="normal" stroke="#000" stroke-width="2.2" stroke-linejoin="round" paint-order="stroke">1.45k</text>
<text x="396.81" y="1557.10" font-size="17.3" text-anchor="middle" fill="#fff" font-weight="normal" stroke="#000" stroke-width="2.2" stroke-linejoin="round" paint-order="stroke">1.80k</text>
<text x="448.22" y="1557.10" font-size="17.3" text-anchor="middle" fill="#fff" font-weight="normal" stroke="#000" stroke-width="2.2" stroke-linejoin="round" paint-order="stroke">2.10k</text>
<text x="508.20" y="1557.10" font-size="17.3" text-anchor="middle" fill="#fff" font-weight="normal" stroke="#000" stroke-width="2.2" stroke-linejoin="round" paint-order="stroke">2.45k</text>
<text x="568.18" y="1557.10" font-size="17.3" text-anchor="middle" fill="#fff" font-weight="normal" stroke="#000" stroke-width="2.2" stroke-linejoin="round" paint-order="stroke">2.80k</text>
<text x="628.16" y="1557.10" font-size="17.3" text-anchor="middle" fill="#fff" font-weight="normal" stroke="#000" stroke-width="2.2" stroke-linejoin="round" paint-order="stroke">3.15k</text>
<text x="688.14" y="1557.10" font-size="17.3" text-anchor="middle" fill="#fff" font-weight="normal" stroke="#000" stroke-width="2.2" stroke-linejoin="round" paint-order="stroke">3.50k</text>
<text x="756.69" y="1557.10" font-size="17.3" text-anchor="middle" fill="#fff" font-weight="normal" stroke="#000" stroke-width="2.2" stroke-linejoin="round" paint-order="stroke">3.90k</text>
<text x="808.10" y="1557.10" font-size="17.3" text-anchor="middle" fill="#fff" font-weight="normal" stroke="#000" stroke-width="2.2" stroke-linejoin="round" paint-order="stroke">4.20k</text>
<text x="876.65" y="1557.10" font-size="17.3" text-anchor="middle" fill="#fff" font-weight="normal" stroke="#000" stroke-width="2.2" stroke-linejoin="round" paint-order="stroke">4.60k</text>
<text x="945.19" y="1557.10" font-size="17.3" text-anchor="middle" fill="#fff" font-weight="normal" stroke="#000" stroke-width="2.2" stroke-linejoin="round" paint-order="stroke">5.00k</text>
<text x="1013.74" y="1557.10" font-size="17.3" text-anchor="middle" fill="#fff" font-weight="normal" stroke="#000" stroke-width="2.2" stroke-linejoin="round" paint-order="stroke">5.40k</text>
<text x="1082.29" y="1557.10" font-size="17.3" text-anchor="middle" fill="#fff" font-weight="normal" stroke="#000" stroke-width="2.2" stroke-linejoin="round" paint-order="stroke">5.80k</text>
<text x="1150.84" y="1557.10" font-size="17.3" text-anchor="middle" fill="#fff" font-weight="normal" stroke="#000" stroke-width="2.2" stroke-linejoin="round" paint-order="stroke">6.20k</text>
<text x="1219.39" y="1557.10" font-size="17.3" text-anchor="middle" fill="#fff" font-weight="normal" stroke="#000" stroke-width="2.2" stroke-linejoin="round" paint-order="stroke">6.60k</text>
<text x="1287.93" y="1557.10" font-size="17.3" text-anchor="middle" fill="#fff" font-weight="normal" stroke="#000" stroke-width="2.2" stroke-linejoin="round" paint-order="stroke">7.00k</text>
<text x="1356.48" y="1557.10" font-size="17.3" text-anchor="middle" fill="#fff" font-weight="normal" stroke="#000" stroke-width="2.2" stroke-linejoin="round" paint-order="stroke">7.40k</text>
<text x="1425.03" y="1557.10" font-size="17.3" text-anchor="middle" fill="#fff" font-weight="normal" stroke="#000" stroke-width="2.2" stroke-linejoin="round" paint-order="stroke">7.80k</text>
<text x="1493.58" y="1557.10" font-size="17.3" text-anchor="middle" fill="#fff" font-weight="normal" stroke="#000" stroke-width="2.2" stroke-linejoin="round" paint-order="stroke">8.20k</text>
<text x="1562.13" y="1557.10" font-size="17.3" text-anchor="middle" fill="#fff" font-weight="normal" stroke="#000" stroke-width="2.2" stroke-linejoin="round" paint-order="stroke">8.60k</text>
<text x="1630.67" y="1557.10" font-size="17.3" text-anchor="middle" fill="#fff" font-weight="normal" stroke="#000" stroke-width="2.2" stroke-linejoin="round" paint-order="stroke">9.00k</text>
<text x="1699.22" y="1557.10" font-size="17.3" text-anchor="middle" fill="#fff" font-weight="normal" stroke="#000" stroke-width="2.2" stroke-linejoin="round" paint-order="stroke">9.40k</text>
<text x="1767.77" y="1557.10" font-size="17.3" text-anchor="middle" fill="#fff" font-weight="normal" stroke="#000" stroke-width="2.2" stroke-linejoin="round" paint-order="stroke">9.80k</text>
<text x="1836.32" y="1557.10" font-size="17.3" text-anchor="middle" fill="#fff" font-weight="normal" stroke="#000" stroke-width="2.2" stroke-linejoin="round" paint-order="stroke">10.20k</text>
<text x="1904.87" y="1557.10" font-size="17.3" text-anchor="middle" fill="#fff" font-weight="normal" stroke="#000" stroke-width="2.2" stroke-linejoin="round" paint-order="stroke">10.60k</text>
<text x="1973.41" y="1557.10" font-size="17.3" text-anchor="middle" fill="#fff" font-weight="normal" stroke="#000" stroke-width="2.2" stroke-linejoin="round" paint-order="stroke">11.00k</text>
<text x="2041.96" y="1557.10" font-size="17.3" text-anchor="middle" fill="#fff" font-weight="normal" stroke="#000" stroke-width="2.2" stroke-linejoin="round" paint-order="stroke">11.40k</text>
<text x="2110.51" y="1557.10" font-size="17.3" text-anchor="middle" fill="#fff" font-weight="normal" stroke="#000" stroke-width="2.2" stroke-linejoin="round" paint-order="stroke">11.80k</text>
<text x="1108.40" y="1586.20" font-size="20" text-anchor="middle" fill="#fff" font-weight="normal" stroke="#000" stroke-width="2.2" stroke-linejoin="round" paint-order="stroke">Time (ms)</text>
<text transform="translate(32,950.8) rotate(-90)" x="0" y="0" font-size="19.5" text-anchor="middle" fill="#fff" stroke="#000" stroke-width="2.2" stroke-linejoin="round" paint-order="stroke">Level (dB)</text>
<rect x="14.3" y="1566.2" width="24.8" height="25.3" rx="3.5" fill="#1e2022" stroke="#fff" stroke-width="3"/>
<rect x="18.75" y="1577" width="15.6" height="4.2" fill="#fff"/>
<rect x="25" y="1571.6" width="4.1" height="15.3" fill="#fff"/>
<path d="M2143.84,1570.93 L2145.01,1566.26 L2150.19,1566.26 L2151.36,1570.93 L2152.70,1571.71 L2157.34,1570.39 L2159.93,1574.88 L2156.47,1578.22 L2156.47,1579.78 L2159.93,1583.12 L2157.34,1587.61 L2152.70,1586.29 L2151.36,1587.07 L2150.19,1591.74 L2145.01,1591.74 L2143.84,1587.07 L2142.50,1586.29 L2137.86,1587.61 L2135.27,1583.12 L2138.73,1579.78 L2138.73,1578.22 L2135.27,1574.88 L2137.86,1570.39 L2142.50,1571.71 Z" fill="none" stroke="#000" stroke-width="6" stroke-linejoin="miter" stroke-opacity="0.85"/>
<path d="M2143.84,1570.93 L2145.01,1566.26 L2150.19,1566.26 L2151.36,1570.93 L2152.70,1571.71 L2157.34,1570.39 L2159.93,1574.88 L2156.47,1578.22 L2156.47,1579.78 L2159.93,1583.12 L2157.34,1587.61 L2152.70,1586.29 L2151.36,1587.07 L2150.19,1591.74 L2145.01,1591.74 L2143.84,1587.07 L2142.50,1586.29 L2137.86,1587.61 L2135.27,1583.12 L2138.73,1579.78 L2138.73,1578.22 L2135.27,1574.88 L2137.86,1570.39 L2142.50,1571.71 Z" fill="none" stroke="#fff" stroke-width="3.6" stroke-linejoin="miter"/>
<circle cx="2147.6" cy="1579" r="4.7" fill="none" stroke="#000" stroke-width="5.6"/>
<circle cx="2147.6" cy="1579" r="4.7" fill="none" stroke="#fff" stroke-width="3"/>
</svg></body></html>
